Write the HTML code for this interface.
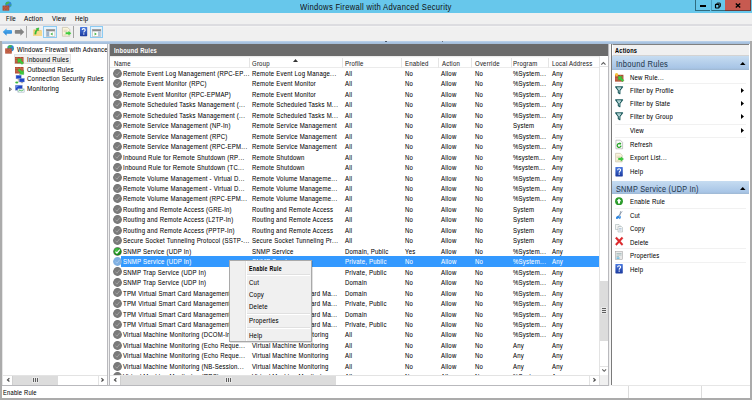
<!DOCTYPE html>
<html><head><meta charset="utf-8"><style>
html,body{margin:0;padding:0;}
body{width:752px;height:400px;position:relative;overflow:hidden;background:#f0f0f0;font-family:'Liberation Sans', sans-serif;}
body div{position:absolute;}
.t{white-space:nowrap;font-family:'Liberation Sans', sans-serif;}
svg{overflow:visible}
</style></head><body>
<div style="left:0px;top:0px;width:752px;height:12.5px;background:#67c7eb"></div>
<div class="t" style="left:300.2px;top:1.6px;font-size:8.919px;line-height:10px;color:#111;font-weight:normal;transform:scaleX(0.8600);transform-origin:0 0;letter-spacing:0.320px;-webkit-text-stroke:0px #111;">Windows Firewall with Advanced Security</div>
<div style="left:695.4px;top:0px;width:15.1px;height:10.8px;background:#67c7eb;border:0.9px solid #2f6c80;border-top:none;border-right:none;box-sizing:border-box"></div>
<div style="left:710.5px;top:0px;width:14.6px;height:10.8px;background:#67c7eb;border-bottom:0.8px solid #2f6c80;border-left:1.4px solid #4c9ec0;box-sizing:border-box"></div>
<div style="left:725.1px;top:0px;width:25.6px;height:10.8px;background:#c75a50;border:0.8px solid #6e3a36;border-top:none;border-left:none;box-sizing:border-box"></div>
<div style="left:700px;top:4.8px;width:6.2px;height:2.2px;background:#000"></div>
<svg style="position:absolute;left:714px;top:1.5px" width="8" height="7" viewBox="0 0 8 7"><rect x="2.9" y="1.1" width="3.5" height="3.7" rx="0.4" fill="none" stroke="#111" stroke-width="1"/><rect x="1.5" y="2.3" width="3.5" height="3.7" rx="0.5" fill="#67c7eb" stroke="#000" stroke-width="1.2"/></svg>
<svg style="position:absolute;left:735px;top:2.6px" width="6" height="5" viewBox="0 0 6 5"><path d="M0.8 0.5L5.2 4.5M5.2 0.5L0.8 4.5" stroke="#000" stroke-width="1.4"/></svg>
<svg style="position:absolute;left:1.5px;top:0.6px" width="10" height="10" viewBox="0 0 10 10"><circle cx="6.4" cy="3.6" r="3.1" fill="#2f86d8"/><path d="M3.6 2.2Q5 0.2 7.6 0.9L7 2.4L5.4 2.8L5 4L3.5 3.6Z" fill="#45b84a"/><path d="M8 3.8L9.4 3.6L9.1 5.4Z" fill="#45b84a"/><rect x="0.6" y="4.6" width="6.6" height="5" fill="#a8432b"/><path d="M0.6 6.2H7.2M0.6 7.9H7.2M2.6 4.6V6.2M5.2 4.6V6.2M3.9 6.2V7.9M2.6 7.9V9.6M5.2 7.9V9.6" stroke="#d0806a" stroke-width="0.4"/></svg>
<div style="left:0px;top:12.5px;width:752px;height:11.5px;background:#f0f0f0"></div>
<div class="t" style="left:5.6px;top:13.6px;font-size:6.618px;line-height:10px;color:#000;font-weight:normal;transform:scaleX(0.8600);transform-origin:0 0;letter-spacing:0.237px;-webkit-text-stroke:0.05px #000;">File</div>
<div class="t" style="left:24.2px;top:13.6px;font-size:7.378px;line-height:10px;color:#000;font-weight:normal;transform:scaleX(0.8600);transform-origin:0 0;letter-spacing:0.264px;-webkit-text-stroke:0.05px #000;">Action</div>
<div class="t" style="left:52.1px;top:13.6px;font-size:7.161px;line-height:10px;color:#000;font-weight:normal;transform:scaleX(0.8600);transform-origin:0 0;letter-spacing:0.257px;-webkit-text-stroke:0.05px #000;">View</div>
<div class="t" style="left:74.7px;top:13.6px;font-size:7.053px;line-height:10px;color:#000;font-weight:normal;transform:scaleX(0.8600);transform-origin:0 0;letter-spacing:0.253px;-webkit-text-stroke:0.05px #000;">Help</div>
<div style="left:0px;top:24.3px;width:752px;height:1.3px;background:#dcdce0"></div>
<div style="left:0px;top:25.6px;width:752px;height:15.2px;background:linear-gradient(#f6f6f6,#f0f0f0 1.5px)"></div>
<svg style="position:absolute;left:0;top:24px" width="30" height="16" viewBox="0 24 30 16"><defs><linearGradient id="gb" x1="0" y1="0" x2="0" y2="1"><stop offset="0" stop-color="#5db4f0"/><stop offset="1" stop-color="#1a7fd6"/></linearGradient></defs><path d="M2.8 32L6.6 28.2V30H11.2Q12 30 12 31V32.8Q12 33.8 11.2 33.8H6.6V35.8Z" fill="url(#gb)"/><path d="M24.2 32L20.4 28.2V30H15.6Q14.8 30 14.8 31V32.8Q14.8 33.8 15.6 33.8H20.4V35.8Z" fill="#838383"/><rect x="26" y="26" width="0.9" height="11.8" fill="#a2a2a2"/></svg>
<svg style="position:absolute;left:32.6px;top:27.4px" width="9" height="9.5" viewBox="0 0 9 9.5"><path d="M0.4 2.4H3.4L4.2 3.2H8.6V9H0.4Z" fill="#e5c063"/><path d="M0.4 4H8.6V9H0.4Z" fill="#f6da8c"/><path d="M1.6 7.2Q1.4 4.2 3.6 2.6L3 1.6L6 0.8L5.4 4L4.7 3.3Q3 4.6 3.1 7.2Z" fill="#36c236" stroke="#2a9a2a" stroke-width="0.25"/></svg>
<div style="left:43px;top:25.8px;width:13.6px;height:12px;background:#e6f3fc;border:1.3px solid #8ccbf3;box-sizing:border-box"></div>
<svg style="position:absolute;left:45.5px;top:28.8px" width="9.2" height="7.6" viewBox="0 0 9.2 7.6"><rect x="0.3" y="0.3" width="8.6" height="7" fill="#fdfdfd" stroke="#a8a8a8" stroke-width="0.5"/><rect x="0.3" y="0.3" width="8.6" height="2" fill="#8a8a8a"/><rect x="0.5" y="2.3" width="2.8" height="5" fill="#9db3c9"/><path d="M6.6 3.6L4.4 5L6.6 6.4Z" fill="#3bb03b"/></svg>
<svg style="position:absolute;left:62px;top:27px" width="10" height="10" viewBox="0 0 10 10"><path d="M0.4 0.4H5.6L7.8 2.6V9.2H0.4Z" fill="#fbf5dc" stroke="#b9b39a" stroke-width="0.6"/><path d="M1.6 3.2H5.5M1.6 4.6H5.5M1.6 7.8H4" stroke="#c9c2a6" stroke-width="0.6"/><path d="M3.6 5.2H6.4V3.9L9.3 6.2L6.4 8.5V7.2H3.6Z" fill="#3ccc3c"/></svg>
<div style="left:73.2px;top:26px;width:0.9px;height:11.8px;background:#a2a2a2"></div>
<svg style="position:absolute;left:79.8px;top:27.2px" width="7.2" height="9.2" viewBox="0 0 7.2 9.2"><defs><linearGradient id="gh" x1="0" y1="0" x2="0" y2="1"><stop offset="0" stop-color="#4a7ae0"/><stop offset="1" stop-color="#1c3a9e"/></linearGradient></defs><rect x="0" y="0" width="7.2" height="9.2" rx="0.6" fill="url(#gh)"/><path d="M2.2 3.1Q2.2 1.6 3.7 1.6Q5.2 1.6 5.2 3Q5.2 3.8 4.3 4.4Q3.8 4.8 3.8 5.6" stroke="#fff" stroke-width="1.1" fill="none"/><rect x="3.2" y="6.4" width="1.2" height="1.2" fill="#fff"/></svg>
<div style="left:90px;top:25.8px;width:12.8px;height:12px;background:#e6f3fc;border:1.3px solid #8ccbf3;box-sizing:border-box"></div>
<svg style="position:absolute;left:91.8px;top:28.8px" width="9.2" height="7.6" viewBox="0 0 9.2 7.6"><rect x="0.3" y="0.3" width="8.6" height="7" fill="#fdfdfd" stroke="#a8a8a8" stroke-width="0.5"/><rect x="0.3" y="0.3" width="8.6" height="2" fill="#8a8a8a"/><rect x="6" y="2.3" width="2.7" height="5" fill="#b5c6d8"/><path d="M2.6 3.6L4.8 5L2.6 6.4Z" fill="#3bb03b"/></svg>
<div style="left:0px;top:40.7px;width:752px;height:3px;background:linear-gradient(#c3d7ec,#a9c4e2 40%,#a9c4e2 75%,#a4b6ca)"></div>
<div style="left:0px;top:40.8px;width:2.4px;height:359.2px;background:#ababab"></div>
<div style="left:749.7px;top:40.8px;width:2.3px;height:359.2px;background:#ababab"></div>
<div style="left:0px;top:398px;width:752px;height:2px;background:#ababab"></div>
<div style="left:2.4px;top:43.7px;width:747.3px;height:341.3px;background:#f0f0f0"></div>
<div style="left:2.4px;top:385px;width:607.1px;height:1px;background:#b9b9bd"></div>
<div style="left:2.4px;top:386px;width:747.3px;height:12px;background:#fff"></div>
<div style="left:628.2px;top:386px;width:0.9px;height:12px;background:#dcdcdc"></div>
<div style="left:701px;top:386px;width:0.9px;height:12px;background:#dcdcdc"></div>
<div class="t" style="left:3.3px;top:388px;font-size:6.727px;line-height:10px;color:#000;font-weight:normal;transform:scaleX(0.8600);transform-origin:0 0;letter-spacing:0.241px;-webkit-text-stroke:0.05px #000;">Enable Rule</div>
<div style="left:385.2px;top:40.7px;width:1.6px;height:1.5px;border-radius:50%;background:#3d4c5e"></div>
<div style="left:441.6px;top:40.7px;width:1.5px;height:1.5px;border-radius:50%;background:#4a5560"></div>
<div style="left:2.4px;top:43.7px;width:104.6px;height:341.3px;background:#fff"></div>
<div style="left:2.4px;top:43.7px;width:0.6px;height:341.3px;background:#e6e6e6"></div>
<div style="left:3px;top:375px;width:104px;height:10px;background:#fff;border-top:0.8px solid #e3e3e3;box-sizing:border-box"></div>
<div style="left:12.3px;top:375.6px;width:45.5px;height:9.4px;background:#dcdcdc;border-left:0.6px solid #cfcfcf;box-sizing:border-box"></div>
<div style="left:97.6px;top:375.6px;width:0.6px;height:9.4px;background:#e3e3e3"></div>
<svg style="position:absolute;left:6.6px;top:378px" width="2.8" height="3.8" viewBox="0 0 2.8 3.8"><path d="M2.4 0.3L0.5 1.9L2.4 3.5" stroke="#4a4a4a" stroke-width="1.15" fill="none"/></svg>
<svg style="position:absolute;left:100.6px;top:378px" width="2.8" height="3.8" viewBox="0 0 2.8 3.8"><path d="M0.4 0.3L2.3 1.9L0.4 3.5" stroke="#4a4a4a" stroke-width="1.15" fill="none"/></svg>
<div style="left:32.0px;top:377.0px;width:7px;height:5.8px;background:#e8e8e8"></div>
<div style="left:32.95px;top:378.0px;width:1.1px;height:3.8px;background:#5e5e5e"></div>
<div style="left:34.95px;top:378.0px;width:1.1px;height:3.8px;background:#5e5e5e"></div>
<div style="left:36.95px;top:378.0px;width:1.1px;height:3.8px;background:#5e5e5e"></div>
<div style="left:14.3px;top:54.3px;width:56.6px;height:9.7px;background:#f0f0f0;border:0.5px solid #e2e2e2;box-sizing:border-box"></div>
<div class="t" style="left:16.8px;top:45px;font-size:7.053px;line-height:10px;color:#000;font-weight:normal;transform:scaleX(0.8600);transform-origin:0 0;letter-spacing:0.253px;-webkit-text-stroke:0.05px #000;">Windows Firewall with Advance</div>
<div style="left:107px;top:43.7px;width:2px;height:331px;background:#f0f0f0"></div>
<div style="left:107px;top:43.7px;width:0.9px;height:341.3px;background:#b9b9bd"></div>
<div class="t" style="left:26.6px;top:54.5px;font-size:7.053px;line-height:10px;color:#000;font-weight:normal;transform:scaleX(0.8600);transform-origin:0 0;letter-spacing:0.253px;-webkit-text-stroke:0.05px #000;">Inbound Rules</div>
<div class="t" style="left:26.6px;top:64.5px;font-size:7.053px;line-height:10px;color:#000;font-weight:normal;transform:scaleX(0.8600);transform-origin:0 0;letter-spacing:0.253px;-webkit-text-stroke:0.05px #000;">Outbound Rules</div>
<div class="t" style="left:26.6px;top:74.3px;font-size:7.053px;line-height:10px;color:#000;font-weight:normal;transform:scaleX(0.8600);transform-origin:0 0;letter-spacing:0.253px;-webkit-text-stroke:0.05px #000;">Connection Security Rules</div>
<div class="t" style="left:26.6px;top:84px;font-size:7.432px;line-height:10px;color:#000;font-weight:normal;transform:scaleX(0.8600);transform-origin:0 0;letter-spacing:0.266px;-webkit-text-stroke:0.05px #000;">Monitoring</div>
<svg style="position:absolute;left:8.8px;top:87.4px" width="3" height="4.5" viewBox="0 0 3 4.5"><path d="M0.5 0.5L2.6 2.25L0.5 4Z" stroke="#5e5e5e" stroke-width="0.7" fill="#b0b0b0"/></svg>
<svg style="position:absolute;left:5px;top:44.8px" width="9.5" height="9" viewBox="0 0 9.5 9"><circle cx="5.6" cy="3.3" r="3.3" fill="#2f86d8"/><path d="M2.8 1.8Q4.5 -0.2 7 0.6L6.3 2.2L4.8 2.4L4.4 3.6L3 3.2Z" fill="#45b84a"/><path d="M7.5 3.5L8.9 3.3L8.6 5Z" fill="#45b84a"/><g transform="translate(0.2 3.4) scale(0.77 0.8)"><rect x="0" y="0" width="8.5" height="6.5" fill="#b14a30"/><path d="M0 1.6H8.5M0 3.25H8.5M0 4.9H8.5M2 0V1.6M5.5 0V1.6M3.7 1.6V3.25M7 1.6V3.25M2 3.25V4.9M5.5 3.25V4.9M3.7 4.9V6.5M7 4.9V6.5" stroke="#d98a6e" stroke-width="0.45"/></g></svg>
<svg style="position:absolute;left:15.3px;top:56.7px" width="9" height="7.5" viewBox="0 0 9 7.5"><rect x="0" y="0" width="8.5" height="6.5" fill="#b14a30"/><path d="M0 1.6H8.5M0 3.25H8.5M0 4.9H8.5M2 0V1.6M5.5 0V1.6M3.7 1.6V3.25M7 1.6V3.25M2 3.25V4.9M5.5 3.25V4.9M3.7 4.9V6.5M7 4.9V6.5" stroke="#d98a6e" stroke-width="0.45"/><path d="M2.6 1.6L7.2 1.9L5.9 3.2L8.6 5.9L7 7.5L4.3 4.8L2.9 6.2Z" fill="#3ccf3c" stroke="#2a9a2a" stroke-width="0.3"/></svg>
<svg style="position:absolute;left:15.3px;top:66.6px" width="9" height="7.5" viewBox="0 0 9 7.5"><rect x="0" y="0" width="8.5" height="6.5" fill="#b14a30"/><path d="M0 1.6H8.5M0 3.25H8.5M0 4.9H8.5M2 0V1.6M5.5 0V1.6M3.7 1.6V3.25M7 1.6V3.25M2 3.25V4.9M5.5 3.25V4.9M3.7 4.9V6.5M7 4.9V6.5" stroke="#d98a6e" stroke-width="0.45"/><path d="M8.8 7.6L4.2 7.3L5.5 6L2.8 3.3L4.4 1.7L7.1 4.4L8.5 3Z" fill="#3ccf3c" stroke="#2a9a2a" stroke-width="0.3"/></svg>
<svg style="position:absolute;left:14.6px;top:74.8px" width="10" height="9.5" viewBox="0 0 10 9.5"><rect x="1" y="0.2" width="5.2" height="3.6" fill="#1f46c8" stroke="#8aa0d8" stroke-width="0.4"/><rect x="2.6" y="3.8" width="2" height="0.8" fill="#999"/><rect x="4.2" y="3.4" width="5.2" height="3.6" fill="#1f46c8" stroke="#8aa0d8" stroke-width="0.4"/><rect x="5.8" y="7" width="2.2" height="1.2" fill="#aaa"/><path d="M3.4 4.6V7" stroke="#666" stroke-width="0.4"/><ellipse cx="1.8" cy="7.4" rx="1.6" ry="1" fill="#3cba3c"/></svg>
<svg style="position:absolute;left:15.3px;top:85.2px" width="9.5" height="7.5" viewBox="0 0 9.5 7.5"><rect x="0.3" y="0.2" width="7" height="5" fill="#1f46c8" stroke="#9aa8c8" stroke-width="0.5"/><path d="M0.8 0.7L4 0.7L1 3Z" fill="#6a8ee8"/><rect x="2.8" y="3.8" width="6.5" height="3.4" fill="#e4ecf4" stroke="#9ab" stroke-width="0.4"/><path d="M3.4 6.3L5 4.8L6.2 6L8.8 4.6" stroke="#3cba3c" stroke-width="0.8" fill="none"/></svg>
<div style="left:109px;top:43.7px;width:1px;height:341.3px;background:#b9b9bd"></div>
<div style="left:110px;top:43.7px;width:498.4px;height:12.2px;background:#6b6b6b"></div>
<div class="t" style="left:113.8px;top:45.5px;font-size:6.760px;line-height:10px;color:#fff;font-weight:bold;transform:scaleX(0.8600);transform-origin:0 0;letter-spacing:0.242px;-webkit-text-stroke:0px #fff;">Inbound Rules</div>
<div style="left:110px;top:55.9px;width:489.3px;height:11.8px;background:linear-gradient(#e4e4e4,#fff 1.8px,#fff)"></div>
<div style="left:110px;top:67.3px;width:489.3px;height:0.8px;background:#ebebeb"></div>
<div style="left:248.6px;top:57.8px;width:0.8px;height:9.9px;background:#e5e5e5"></div>
<div style="left:341.6px;top:57.8px;width:0.8px;height:9.9px;background:#e5e5e5"></div>
<div style="left:401.40000000000003px;top:57.8px;width:0.8px;height:9.9px;background:#e5e5e5"></div>
<div style="left:438.20000000000005px;top:57.8px;width:0.8px;height:9.9px;background:#e5e5e5"></div>
<div style="left:471.20000000000005px;top:57.8px;width:0.8px;height:9.9px;background:#e5e5e5"></div>
<div style="left:511.40000000000003px;top:57.8px;width:0.8px;height:9.9px;background:#e5e5e5"></div>
<div style="left:548.4px;top:57.8px;width:0.8px;height:9.9px;background:#e5e5e5"></div>
<div class="t" style="left:114px;top:58.9px;font-size:6.998px;line-height:10px;color:#1e1e1e;font-weight:normal;transform:scaleX(0.8600);transform-origin:0 0;letter-spacing:0.251px;-webkit-text-stroke:0.05px #1e1e1e;">Name</div>
<div class="t" style="left:252px;top:58.9px;font-size:6.998px;line-height:10px;color:#1e1e1e;font-weight:normal;transform:scaleX(0.8600);transform-origin:0 0;letter-spacing:0.251px;-webkit-text-stroke:0.05px #1e1e1e;">Group</div>
<div class="t" style="left:345.3px;top:58.9px;font-size:6.998px;line-height:10px;color:#1e1e1e;font-weight:normal;transform:scaleX(0.8600);transform-origin:0 0;letter-spacing:0.251px;-webkit-text-stroke:0.05px #1e1e1e;">Profile</div>
<div class="t" style="left:404.7px;top:58.9px;font-size:6.998px;line-height:10px;color:#1e1e1e;font-weight:normal;transform:scaleX(0.8600);transform-origin:0 0;letter-spacing:0.251px;-webkit-text-stroke:0.05px #1e1e1e;">Enabled</div>
<div class="t" style="left:441.5px;top:58.9px;font-size:6.998px;line-height:10px;color:#1e1e1e;font-weight:normal;transform:scaleX(0.8600);transform-origin:0 0;letter-spacing:0.251px;-webkit-text-stroke:0.05px #1e1e1e;">Action</div>
<div class="t" style="left:474.8px;top:58.9px;font-size:6.998px;line-height:10px;color:#1e1e1e;font-weight:normal;transform:scaleX(0.8600);transform-origin:0 0;letter-spacing:0.251px;-webkit-text-stroke:0.05px #1e1e1e;">Override</div>
<div class="t" style="left:513px;top:58.9px;font-size:6.998px;line-height:10px;color:#1e1e1e;font-weight:normal;transform:scaleX(0.8600);transform-origin:0 0;letter-spacing:0.251px;-webkit-text-stroke:0.05px #1e1e1e;">Program</div>
<div class="t" style="left:552.3px;top:58.9px;font-size:6.998px;line-height:10px;color:#1e1e1e;font-weight:normal;transform:scaleX(0.8600);transform-origin:0 0;letter-spacing:0.251px;-webkit-text-stroke:0.05px #1e1e1e;">Local Address</div>
<svg style="position:absolute;left:292.5px;top:59.3px" width="5" height="3" viewBox="0 0 5 3"><path d="M0 3L2.5 0L5 3Z" fill="#333"/></svg>
<div style="left:110px;top:68.1px;width:489.3px;height:306.9px;background:#fff"></div>
<div style="left:109.7px;top:68.4px;width:489.6px;height:306.6px;overflow:hidden">
<svg style="position:absolute;left:3.0999999999999943px;top:0.29999999999999716px" width="9" height="9" viewBox="0 0 10 10"><circle cx="5" cy="5" r="4.9" fill="#737373"/><circle cx="5" cy="5" r="4.2" fill="#7a7a7a"/><path d="M2.7 5.1L4.4 6.9L7.5 3" stroke="#a6a6a6" stroke-width="1" fill="none"/></svg>
<div class="t" style="left:13.299999999999997px;top:0.5699999999999967px;font-size:6.998px;line-height:10px;color:#000;font-weight:normal;transform:scaleX(0.8600);transform-origin:0 0;letter-spacing:0.251px;-webkit-text-stroke:0.05px #000;">Remote Event Log Management (RPC-EP<span style="letter-spacing:0.551px">...</span></div>
<div class="t" style="left:142.3px;top:0.5699999999999967px;font-size:6.998px;line-height:10px;color:#000;font-weight:normal;transform:scaleX(0.8600);transform-origin:0 0;letter-spacing:0.251px;-webkit-text-stroke:0.05px #000;">Remote Event Log Manage<span style="letter-spacing:0.551px">...</span></div>
<div class="t" style="left:235.60000000000002px;top:0.5699999999999967px;font-size:6.998px;line-height:10px;color:#000;font-weight:normal;transform:scaleX(0.8600);transform-origin:0 0;letter-spacing:0.251px;-webkit-text-stroke:0.05px #000;">All</div>
<div class="t" style="left:295.0px;top:0.5699999999999967px;font-size:6.998px;line-height:10px;color:#000;font-weight:normal;transform:scaleX(0.8600);transform-origin:0 0;letter-spacing:0.251px;-webkit-text-stroke:0.05px #000;">No</div>
<div class="t" style="left:331.8px;top:0.5699999999999967px;font-size:6.998px;line-height:10px;color:#000;font-weight:normal;transform:scaleX(0.8600);transform-origin:0 0;letter-spacing:0.251px;-webkit-text-stroke:0.05px #000;">Allow</div>
<div class="t" style="left:365.1px;top:0.5699999999999967px;font-size:6.998px;line-height:10px;color:#000;font-weight:normal;transform:scaleX(0.8600);transform-origin:0 0;letter-spacing:0.251px;-webkit-text-stroke:0.05px #000;">No</div>
<div class="t" style="left:403.3px;top:0.5699999999999967px;font-size:6.998px;line-height:10px;color:#000;font-weight:normal;transform:scaleX(0.8600);transform-origin:0 0;letter-spacing:0.251px;-webkit-text-stroke:0.05px #000;">%System<span style="letter-spacing:0.551px">...</span></div>
<div class="t" style="left:442.59999999999997px;top:0.5699999999999967px;font-size:6.998px;line-height:10px;color:#000;font-weight:normal;transform:scaleX(0.8600);transform-origin:0 0;letter-spacing:0.251px;-webkit-text-stroke:0.05px #000;">Any</div>
<svg style="position:absolute;left:3.0999999999999943px;top:10.759999999999991px" width="9" height="9" viewBox="0 0 10 10"><circle cx="5" cy="5" r="4.9" fill="#737373"/><circle cx="5" cy="5" r="4.2" fill="#7a7a7a"/><path d="M2.7 5.1L4.4 6.9L7.5 3" stroke="#a6a6a6" stroke-width="1" fill="none"/></svg>
<div class="t" style="left:13.299999999999997px;top:11.02999999999999px;font-size:6.998px;line-height:10px;color:#000;font-weight:normal;transform:scaleX(0.8600);transform-origin:0 0;letter-spacing:0.251px;-webkit-text-stroke:0.05px #000;">Remote Event Monitor (RPC)</div>
<div class="t" style="left:142.3px;top:11.02999999999999px;font-size:6.998px;line-height:10px;color:#000;font-weight:normal;transform:scaleX(0.8600);transform-origin:0 0;letter-spacing:0.251px;-webkit-text-stroke:0.05px #000;">Remote Event Monitor</div>
<div class="t" style="left:235.60000000000002px;top:11.02999999999999px;font-size:6.998px;line-height:10px;color:#000;font-weight:normal;transform:scaleX(0.8600);transform-origin:0 0;letter-spacing:0.251px;-webkit-text-stroke:0.05px #000;">All</div>
<div class="t" style="left:295.0px;top:11.02999999999999px;font-size:6.998px;line-height:10px;color:#000;font-weight:normal;transform:scaleX(0.8600);transform-origin:0 0;letter-spacing:0.251px;-webkit-text-stroke:0.05px #000;">No</div>
<div class="t" style="left:331.8px;top:11.02999999999999px;font-size:6.998px;line-height:10px;color:#000;font-weight:normal;transform:scaleX(0.8600);transform-origin:0 0;letter-spacing:0.251px;-webkit-text-stroke:0.05px #000;">Allow</div>
<div class="t" style="left:365.1px;top:11.02999999999999px;font-size:6.998px;line-height:10px;color:#000;font-weight:normal;transform:scaleX(0.8600);transform-origin:0 0;letter-spacing:0.251px;-webkit-text-stroke:0.05px #000;">No</div>
<div class="t" style="left:403.3px;top:11.02999999999999px;font-size:6.998px;line-height:10px;color:#000;font-weight:normal;transform:scaleX(0.8600);transform-origin:0 0;letter-spacing:0.251px;-webkit-text-stroke:0.05px #000;">%System<span style="letter-spacing:0.551px">...</span></div>
<div class="t" style="left:442.59999999999997px;top:11.02999999999999px;font-size:6.998px;line-height:10px;color:#000;font-weight:normal;transform:scaleX(0.8600);transform-origin:0 0;letter-spacing:0.251px;-webkit-text-stroke:0.05px #000;">Any</div>
<svg style="position:absolute;left:3.0999999999999943px;top:21.22px" width="9" height="9" viewBox="0 0 10 10"><circle cx="5" cy="5" r="4.9" fill="#737373"/><circle cx="5" cy="5" r="4.2" fill="#7a7a7a"/><path d="M2.7 5.1L4.4 6.9L7.5 3" stroke="#a6a6a6" stroke-width="1" fill="none"/></svg>
<div class="t" style="left:13.299999999999997px;top:21.49px;font-size:6.998px;line-height:10px;color:#000;font-weight:normal;transform:scaleX(0.8600);transform-origin:0 0;letter-spacing:0.251px;-webkit-text-stroke:0.05px #000;">Remote Event Monitor (RPC-EPMAP)</div>
<div class="t" style="left:142.3px;top:21.49px;font-size:6.998px;line-height:10px;color:#000;font-weight:normal;transform:scaleX(0.8600);transform-origin:0 0;letter-spacing:0.251px;-webkit-text-stroke:0.05px #000;">Remote Event Monitor</div>
<div class="t" style="left:235.60000000000002px;top:21.49px;font-size:6.998px;line-height:10px;color:#000;font-weight:normal;transform:scaleX(0.8600);transform-origin:0 0;letter-spacing:0.251px;-webkit-text-stroke:0.05px #000;">All</div>
<div class="t" style="left:295.0px;top:21.49px;font-size:6.998px;line-height:10px;color:#000;font-weight:normal;transform:scaleX(0.8600);transform-origin:0 0;letter-spacing:0.251px;-webkit-text-stroke:0.05px #000;">No</div>
<div class="t" style="left:331.8px;top:21.49px;font-size:6.998px;line-height:10px;color:#000;font-weight:normal;transform:scaleX(0.8600);transform-origin:0 0;letter-spacing:0.251px;-webkit-text-stroke:0.05px #000;">Allow</div>
<div class="t" style="left:365.1px;top:21.49px;font-size:6.998px;line-height:10px;color:#000;font-weight:normal;transform:scaleX(0.8600);transform-origin:0 0;letter-spacing:0.251px;-webkit-text-stroke:0.05px #000;">No</div>
<div class="t" style="left:403.3px;top:21.49px;font-size:6.998px;line-height:10px;color:#000;font-weight:normal;transform:scaleX(0.8600);transform-origin:0 0;letter-spacing:0.251px;-webkit-text-stroke:0.05px #000;">%System<span style="letter-spacing:0.551px">...</span></div>
<div class="t" style="left:442.59999999999997px;top:21.49px;font-size:6.998px;line-height:10px;color:#000;font-weight:normal;transform:scaleX(0.8600);transform-origin:0 0;letter-spacing:0.251px;-webkit-text-stroke:0.05px #000;">Any</div>
<svg style="position:absolute;left:3.0999999999999943px;top:31.680000000000007px" width="9" height="9" viewBox="0 0 10 10"><circle cx="5" cy="5" r="4.9" fill="#737373"/><circle cx="5" cy="5" r="4.2" fill="#7a7a7a"/><path d="M2.7 5.1L4.4 6.9L7.5 3" stroke="#a6a6a6" stroke-width="1" fill="none"/></svg>
<div class="t" style="left:13.299999999999997px;top:31.950000000000006px;font-size:6.998px;line-height:10px;color:#000;font-weight:normal;transform:scaleX(0.8600);transform-origin:0 0;letter-spacing:0.251px;-webkit-text-stroke:0.05px #000;">Remote Scheduled Tasks Management (<span style="letter-spacing:0.551px">...</span></div>
<div class="t" style="left:142.3px;top:31.950000000000006px;font-size:6.998px;line-height:10px;color:#000;font-weight:normal;transform:scaleX(0.8600);transform-origin:0 0;letter-spacing:0.251px;-webkit-text-stroke:0.05px #000;">Remote Scheduled Tasks M<span style="letter-spacing:0.551px">...</span></div>
<div class="t" style="left:235.60000000000002px;top:31.950000000000006px;font-size:6.998px;line-height:10px;color:#000;font-weight:normal;transform:scaleX(0.8600);transform-origin:0 0;letter-spacing:0.251px;-webkit-text-stroke:0.05px #000;">All</div>
<div class="t" style="left:295.0px;top:31.950000000000006px;font-size:6.998px;line-height:10px;color:#000;font-weight:normal;transform:scaleX(0.8600);transform-origin:0 0;letter-spacing:0.251px;-webkit-text-stroke:0.05px #000;">No</div>
<div class="t" style="left:331.8px;top:31.950000000000006px;font-size:6.998px;line-height:10px;color:#000;font-weight:normal;transform:scaleX(0.8600);transform-origin:0 0;letter-spacing:0.251px;-webkit-text-stroke:0.05px #000;">Allow</div>
<div class="t" style="left:365.1px;top:31.950000000000006px;font-size:6.998px;line-height:10px;color:#000;font-weight:normal;transform:scaleX(0.8600);transform-origin:0 0;letter-spacing:0.251px;-webkit-text-stroke:0.05px #000;">No</div>
<div class="t" style="left:403.3px;top:31.950000000000006px;font-size:6.998px;line-height:10px;color:#000;font-weight:normal;transform:scaleX(0.8600);transform-origin:0 0;letter-spacing:0.251px;-webkit-text-stroke:0.05px #000;">%System<span style="letter-spacing:0.551px">...</span></div>
<div class="t" style="left:442.59999999999997px;top:31.950000000000006px;font-size:6.998px;line-height:10px;color:#000;font-weight:normal;transform:scaleX(0.8600);transform-origin:0 0;letter-spacing:0.251px;-webkit-text-stroke:0.05px #000;">Any</div>
<svg style="position:absolute;left:3.0999999999999943px;top:42.14px" width="9" height="9" viewBox="0 0 10 10"><circle cx="5" cy="5" r="4.9" fill="#737373"/><circle cx="5" cy="5" r="4.2" fill="#7a7a7a"/><path d="M2.7 5.1L4.4 6.9L7.5 3" stroke="#a6a6a6" stroke-width="1" fill="none"/></svg>
<div class="t" style="left:13.299999999999997px;top:42.41px;font-size:6.998px;line-height:10px;color:#000;font-weight:normal;transform:scaleX(0.8600);transform-origin:0 0;letter-spacing:0.251px;-webkit-text-stroke:0.05px #000;">Remote Scheduled Tasks Management (<span style="letter-spacing:0.551px">...</span></div>
<div class="t" style="left:142.3px;top:42.41px;font-size:6.998px;line-height:10px;color:#000;font-weight:normal;transform:scaleX(0.8600);transform-origin:0 0;letter-spacing:0.251px;-webkit-text-stroke:0.05px #000;">Remote Scheduled Tasks M<span style="letter-spacing:0.551px">...</span></div>
<div class="t" style="left:235.60000000000002px;top:42.41px;font-size:6.998px;line-height:10px;color:#000;font-weight:normal;transform:scaleX(0.8600);transform-origin:0 0;letter-spacing:0.251px;-webkit-text-stroke:0.05px #000;">All</div>
<div class="t" style="left:295.0px;top:42.41px;font-size:6.998px;line-height:10px;color:#000;font-weight:normal;transform:scaleX(0.8600);transform-origin:0 0;letter-spacing:0.251px;-webkit-text-stroke:0.05px #000;">No</div>
<div class="t" style="left:331.8px;top:42.41px;font-size:6.998px;line-height:10px;color:#000;font-weight:normal;transform:scaleX(0.8600);transform-origin:0 0;letter-spacing:0.251px;-webkit-text-stroke:0.05px #000;">Allow</div>
<div class="t" style="left:365.1px;top:42.41px;font-size:6.998px;line-height:10px;color:#000;font-weight:normal;transform:scaleX(0.8600);transform-origin:0 0;letter-spacing:0.251px;-webkit-text-stroke:0.05px #000;">No</div>
<div class="t" style="left:403.3px;top:42.41px;font-size:6.998px;line-height:10px;color:#000;font-weight:normal;transform:scaleX(0.8600);transform-origin:0 0;letter-spacing:0.251px;-webkit-text-stroke:0.05px #000;">%System<span style="letter-spacing:0.551px">...</span></div>
<div class="t" style="left:442.59999999999997px;top:42.41px;font-size:6.998px;line-height:10px;color:#000;font-weight:normal;transform:scaleX(0.8600);transform-origin:0 0;letter-spacing:0.251px;-webkit-text-stroke:0.05px #000;">Any</div>
<svg style="position:absolute;left:3.0999999999999943px;top:52.599999999999994px" width="9" height="9" viewBox="0 0 10 10"><circle cx="5" cy="5" r="4.9" fill="#737373"/><circle cx="5" cy="5" r="4.2" fill="#7a7a7a"/><path d="M2.7 5.1L4.4 6.9L7.5 3" stroke="#a6a6a6" stroke-width="1" fill="none"/></svg>
<div class="t" style="left:13.299999999999997px;top:52.86999999999999px;font-size:6.998px;line-height:10px;color:#000;font-weight:normal;transform:scaleX(0.8600);transform-origin:0 0;letter-spacing:0.251px;-webkit-text-stroke:0.05px #000;">Remote Service Management (NP-In)</div>
<div class="t" style="left:142.3px;top:52.86999999999999px;font-size:6.998px;line-height:10px;color:#000;font-weight:normal;transform:scaleX(0.8600);transform-origin:0 0;letter-spacing:0.251px;-webkit-text-stroke:0.05px #000;">Remote Service Management</div>
<div class="t" style="left:235.60000000000002px;top:52.86999999999999px;font-size:6.998px;line-height:10px;color:#000;font-weight:normal;transform:scaleX(0.8600);transform-origin:0 0;letter-spacing:0.251px;-webkit-text-stroke:0.05px #000;">All</div>
<div class="t" style="left:295.0px;top:52.86999999999999px;font-size:6.998px;line-height:10px;color:#000;font-weight:normal;transform:scaleX(0.8600);transform-origin:0 0;letter-spacing:0.251px;-webkit-text-stroke:0.05px #000;">No</div>
<div class="t" style="left:331.8px;top:52.86999999999999px;font-size:6.998px;line-height:10px;color:#000;font-weight:normal;transform:scaleX(0.8600);transform-origin:0 0;letter-spacing:0.251px;-webkit-text-stroke:0.05px #000;">Allow</div>
<div class="t" style="left:365.1px;top:52.86999999999999px;font-size:6.998px;line-height:10px;color:#000;font-weight:normal;transform:scaleX(0.8600);transform-origin:0 0;letter-spacing:0.251px;-webkit-text-stroke:0.05px #000;">No</div>
<div class="t" style="left:403.3px;top:52.86999999999999px;font-size:6.998px;line-height:10px;color:#000;font-weight:normal;transform:scaleX(0.8600);transform-origin:0 0;letter-spacing:0.251px;-webkit-text-stroke:0.05px #000;">System</div>
<div class="t" style="left:442.59999999999997px;top:52.86999999999999px;font-size:6.998px;line-height:10px;color:#000;font-weight:normal;transform:scaleX(0.8600);transform-origin:0 0;letter-spacing:0.251px;-webkit-text-stroke:0.05px #000;">Any</div>
<svg style="position:absolute;left:3.0999999999999943px;top:63.06px" width="9" height="9" viewBox="0 0 10 10"><circle cx="5" cy="5" r="4.9" fill="#737373"/><circle cx="5" cy="5" r="4.2" fill="#7a7a7a"/><path d="M2.7 5.1L4.4 6.9L7.5 3" stroke="#a6a6a6" stroke-width="1" fill="none"/></svg>
<div class="t" style="left:13.299999999999997px;top:63.33px;font-size:6.998px;line-height:10px;color:#000;font-weight:normal;transform:scaleX(0.8600);transform-origin:0 0;letter-spacing:0.251px;-webkit-text-stroke:0.05px #000;">Remote Service Management (RPC)</div>
<div class="t" style="left:142.3px;top:63.33px;font-size:6.998px;line-height:10px;color:#000;font-weight:normal;transform:scaleX(0.8600);transform-origin:0 0;letter-spacing:0.251px;-webkit-text-stroke:0.05px #000;">Remote Service Management</div>
<div class="t" style="left:235.60000000000002px;top:63.33px;font-size:6.998px;line-height:10px;color:#000;font-weight:normal;transform:scaleX(0.8600);transform-origin:0 0;letter-spacing:0.251px;-webkit-text-stroke:0.05px #000;">All</div>
<div class="t" style="left:295.0px;top:63.33px;font-size:6.998px;line-height:10px;color:#000;font-weight:normal;transform:scaleX(0.8600);transform-origin:0 0;letter-spacing:0.251px;-webkit-text-stroke:0.05px #000;">No</div>
<div class="t" style="left:331.8px;top:63.33px;font-size:6.998px;line-height:10px;color:#000;font-weight:normal;transform:scaleX(0.8600);transform-origin:0 0;letter-spacing:0.251px;-webkit-text-stroke:0.05px #000;">Allow</div>
<div class="t" style="left:365.1px;top:63.33px;font-size:6.998px;line-height:10px;color:#000;font-weight:normal;transform:scaleX(0.8600);transform-origin:0 0;letter-spacing:0.251px;-webkit-text-stroke:0.05px #000;">No</div>
<div class="t" style="left:403.3px;top:63.33px;font-size:6.998px;line-height:10px;color:#000;font-weight:normal;transform:scaleX(0.8600);transform-origin:0 0;letter-spacing:0.251px;-webkit-text-stroke:0.05px #000;">%System<span style="letter-spacing:0.551px">...</span></div>
<div class="t" style="left:442.59999999999997px;top:63.33px;font-size:6.998px;line-height:10px;color:#000;font-weight:normal;transform:scaleX(0.8600);transform-origin:0 0;letter-spacing:0.251px;-webkit-text-stroke:0.05px #000;">Any</div>
<svg style="position:absolute;left:3.0999999999999943px;top:73.52000000000001px" width="9" height="9" viewBox="0 0 10 10"><circle cx="5" cy="5" r="4.9" fill="#737373"/><circle cx="5" cy="5" r="4.2" fill="#7a7a7a"/><path d="M2.7 5.1L4.4 6.9L7.5 3" stroke="#a6a6a6" stroke-width="1" fill="none"/></svg>
<div class="t" style="left:13.299999999999997px;top:73.79px;font-size:6.998px;line-height:10px;color:#000;font-weight:normal;transform:scaleX(0.8600);transform-origin:0 0;letter-spacing:0.251px;-webkit-text-stroke:0.05px #000;">Remote Service Management (RPC-EPM<span style="letter-spacing:0.551px">...</span></div>
<div class="t" style="left:142.3px;top:73.79px;font-size:6.998px;line-height:10px;color:#000;font-weight:normal;transform:scaleX(0.8600);transform-origin:0 0;letter-spacing:0.251px;-webkit-text-stroke:0.05px #000;">Remote Service Management</div>
<div class="t" style="left:235.60000000000002px;top:73.79px;font-size:6.998px;line-height:10px;color:#000;font-weight:normal;transform:scaleX(0.8600);transform-origin:0 0;letter-spacing:0.251px;-webkit-text-stroke:0.05px #000;">All</div>
<div class="t" style="left:295.0px;top:73.79px;font-size:6.998px;line-height:10px;color:#000;font-weight:normal;transform:scaleX(0.8600);transform-origin:0 0;letter-spacing:0.251px;-webkit-text-stroke:0.05px #000;">No</div>
<div class="t" style="left:331.8px;top:73.79px;font-size:6.998px;line-height:10px;color:#000;font-weight:normal;transform:scaleX(0.8600);transform-origin:0 0;letter-spacing:0.251px;-webkit-text-stroke:0.05px #000;">Allow</div>
<div class="t" style="left:365.1px;top:73.79px;font-size:6.998px;line-height:10px;color:#000;font-weight:normal;transform:scaleX(0.8600);transform-origin:0 0;letter-spacing:0.251px;-webkit-text-stroke:0.05px #000;">No</div>
<div class="t" style="left:403.3px;top:73.79px;font-size:6.998px;line-height:10px;color:#000;font-weight:normal;transform:scaleX(0.8600);transform-origin:0 0;letter-spacing:0.251px;-webkit-text-stroke:0.05px #000;">%System<span style="letter-spacing:0.551px">...</span></div>
<div class="t" style="left:442.59999999999997px;top:73.79px;font-size:6.998px;line-height:10px;color:#000;font-weight:normal;transform:scaleX(0.8600);transform-origin:0 0;letter-spacing:0.251px;-webkit-text-stroke:0.05px #000;">Any</div>
<svg style="position:absolute;left:3.0999999999999943px;top:83.97999999999999px" width="9" height="9" viewBox="0 0 10 10"><circle cx="5" cy="5" r="4.9" fill="#737373"/><circle cx="5" cy="5" r="4.2" fill="#7a7a7a"/><path d="M2.7 5.1L4.4 6.9L7.5 3" stroke="#a6a6a6" stroke-width="1" fill="none"/></svg>
<div class="t" style="left:13.299999999999997px;top:84.24999999999999px;font-size:6.998px;line-height:10px;color:#000;font-weight:normal;transform:scaleX(0.8600);transform-origin:0 0;letter-spacing:0.251px;-webkit-text-stroke:0.05px #000;">Inbound Rule for Remote Shutdown (RP<span style="letter-spacing:0.551px">...</span></div>
<div class="t" style="left:142.3px;top:84.24999999999999px;font-size:6.998px;line-height:10px;color:#000;font-weight:normal;transform:scaleX(0.8600);transform-origin:0 0;letter-spacing:0.251px;-webkit-text-stroke:0.05px #000;">Remote Shutdown</div>
<div class="t" style="left:235.60000000000002px;top:84.24999999999999px;font-size:6.998px;line-height:10px;color:#000;font-weight:normal;transform:scaleX(0.8600);transform-origin:0 0;letter-spacing:0.251px;-webkit-text-stroke:0.05px #000;">All</div>
<div class="t" style="left:295.0px;top:84.24999999999999px;font-size:6.998px;line-height:10px;color:#000;font-weight:normal;transform:scaleX(0.8600);transform-origin:0 0;letter-spacing:0.251px;-webkit-text-stroke:0.05px #000;">No</div>
<div class="t" style="left:331.8px;top:84.24999999999999px;font-size:6.998px;line-height:10px;color:#000;font-weight:normal;transform:scaleX(0.8600);transform-origin:0 0;letter-spacing:0.251px;-webkit-text-stroke:0.05px #000;">Allow</div>
<div class="t" style="left:365.1px;top:84.24999999999999px;font-size:6.998px;line-height:10px;color:#000;font-weight:normal;transform:scaleX(0.8600);transform-origin:0 0;letter-spacing:0.251px;-webkit-text-stroke:0.05px #000;">No</div>
<div class="t" style="left:403.3px;top:84.24999999999999px;font-size:6.998px;line-height:10px;color:#000;font-weight:normal;transform:scaleX(0.8600);transform-origin:0 0;letter-spacing:0.251px;-webkit-text-stroke:0.05px #000;">%system<span style="letter-spacing:0.551px">...</span></div>
<div class="t" style="left:442.59999999999997px;top:84.24999999999999px;font-size:6.998px;line-height:10px;color:#000;font-weight:normal;transform:scaleX(0.8600);transform-origin:0 0;letter-spacing:0.251px;-webkit-text-stroke:0.05px #000;">Any</div>
<svg style="position:absolute;left:3.0999999999999943px;top:94.44000000000003px" width="9" height="9" viewBox="0 0 10 10"><circle cx="5" cy="5" r="4.9" fill="#737373"/><circle cx="5" cy="5" r="4.2" fill="#7a7a7a"/><path d="M2.7 5.1L4.4 6.9L7.5 3" stroke="#a6a6a6" stroke-width="1" fill="none"/></svg>
<div class="t" style="left:13.299999999999997px;top:94.71000000000002px;font-size:6.998px;line-height:10px;color:#000;font-weight:normal;transform:scaleX(0.8600);transform-origin:0 0;letter-spacing:0.251px;-webkit-text-stroke:0.05px #000;">Inbound Rule for Remote Shutdown (TC<span style="letter-spacing:0.551px">...</span></div>
<div class="t" style="left:142.3px;top:94.71000000000002px;font-size:6.998px;line-height:10px;color:#000;font-weight:normal;transform:scaleX(0.8600);transform-origin:0 0;letter-spacing:0.251px;-webkit-text-stroke:0.05px #000;">Remote Shutdown</div>
<div class="t" style="left:235.60000000000002px;top:94.71000000000002px;font-size:6.998px;line-height:10px;color:#000;font-weight:normal;transform:scaleX(0.8600);transform-origin:0 0;letter-spacing:0.251px;-webkit-text-stroke:0.05px #000;">All</div>
<div class="t" style="left:295.0px;top:94.71000000000002px;font-size:6.998px;line-height:10px;color:#000;font-weight:normal;transform:scaleX(0.8600);transform-origin:0 0;letter-spacing:0.251px;-webkit-text-stroke:0.05px #000;">No</div>
<div class="t" style="left:331.8px;top:94.71000000000002px;font-size:6.998px;line-height:10px;color:#000;font-weight:normal;transform:scaleX(0.8600);transform-origin:0 0;letter-spacing:0.251px;-webkit-text-stroke:0.05px #000;">Allow</div>
<div class="t" style="left:365.1px;top:94.71000000000002px;font-size:6.998px;line-height:10px;color:#000;font-weight:normal;transform:scaleX(0.8600);transform-origin:0 0;letter-spacing:0.251px;-webkit-text-stroke:0.05px #000;">No</div>
<div class="t" style="left:403.3px;top:94.71000000000002px;font-size:6.998px;line-height:10px;color:#000;font-weight:normal;transform:scaleX(0.8600);transform-origin:0 0;letter-spacing:0.251px;-webkit-text-stroke:0.05px #000;">%system<span style="letter-spacing:0.551px">...</span></div>
<div class="t" style="left:442.59999999999997px;top:94.71000000000002px;font-size:6.998px;line-height:10px;color:#000;font-weight:normal;transform:scaleX(0.8600);transform-origin:0 0;letter-spacing:0.251px;-webkit-text-stroke:0.05px #000;">Any</div>
<svg style="position:absolute;left:3.0999999999999943px;top:104.9px" width="9" height="9" viewBox="0 0 10 10"><circle cx="5" cy="5" r="4.9" fill="#737373"/><circle cx="5" cy="5" r="4.2" fill="#7a7a7a"/><path d="M2.7 5.1L4.4 6.9L7.5 3" stroke="#a6a6a6" stroke-width="1" fill="none"/></svg>
<div class="t" style="left:13.299999999999997px;top:105.17px;font-size:6.998px;line-height:10px;color:#000;font-weight:normal;transform:scaleX(0.8600);transform-origin:0 0;letter-spacing:0.251px;-webkit-text-stroke:0.05px #000;">Remote Volume Management - Virtual D<span style="letter-spacing:0.551px">...</span></div>
<div class="t" style="left:142.3px;top:105.17px;font-size:6.998px;line-height:10px;color:#000;font-weight:normal;transform:scaleX(0.8600);transform-origin:0 0;letter-spacing:0.251px;-webkit-text-stroke:0.05px #000;">Remote Volume Manageme<span style="letter-spacing:0.551px">...</span></div>
<div class="t" style="left:235.60000000000002px;top:105.17px;font-size:6.998px;line-height:10px;color:#000;font-weight:normal;transform:scaleX(0.8600);transform-origin:0 0;letter-spacing:0.251px;-webkit-text-stroke:0.05px #000;">All</div>
<div class="t" style="left:295.0px;top:105.17px;font-size:6.998px;line-height:10px;color:#000;font-weight:normal;transform:scaleX(0.8600);transform-origin:0 0;letter-spacing:0.251px;-webkit-text-stroke:0.05px #000;">No</div>
<div class="t" style="left:331.8px;top:105.17px;font-size:6.998px;line-height:10px;color:#000;font-weight:normal;transform:scaleX(0.8600);transform-origin:0 0;letter-spacing:0.251px;-webkit-text-stroke:0.05px #000;">Allow</div>
<div class="t" style="left:365.1px;top:105.17px;font-size:6.998px;line-height:10px;color:#000;font-weight:normal;transform:scaleX(0.8600);transform-origin:0 0;letter-spacing:0.251px;-webkit-text-stroke:0.05px #000;">No</div>
<div class="t" style="left:403.3px;top:105.17px;font-size:6.998px;line-height:10px;color:#000;font-weight:normal;transform:scaleX(0.8600);transform-origin:0 0;letter-spacing:0.251px;-webkit-text-stroke:0.05px #000;">%System<span style="letter-spacing:0.551px">...</span></div>
<div class="t" style="left:442.59999999999997px;top:105.17px;font-size:6.998px;line-height:10px;color:#000;font-weight:normal;transform:scaleX(0.8600);transform-origin:0 0;letter-spacing:0.251px;-webkit-text-stroke:0.05px #000;">Any</div>
<svg style="position:absolute;left:3.0999999999999943px;top:115.35999999999999px" width="9" height="9" viewBox="0 0 10 10"><circle cx="5" cy="5" r="4.9" fill="#737373"/><circle cx="5" cy="5" r="4.2" fill="#7a7a7a"/><path d="M2.7 5.1L4.4 6.9L7.5 3" stroke="#a6a6a6" stroke-width="1" fill="none"/></svg>
<div class="t" style="left:13.299999999999997px;top:115.62999999999998px;font-size:6.998px;line-height:10px;color:#000;font-weight:normal;transform:scaleX(0.8600);transform-origin:0 0;letter-spacing:0.251px;-webkit-text-stroke:0.05px #000;">Remote Volume Management - Virtual D<span style="letter-spacing:0.551px">...</span></div>
<div class="t" style="left:142.3px;top:115.62999999999998px;font-size:6.998px;line-height:10px;color:#000;font-weight:normal;transform:scaleX(0.8600);transform-origin:0 0;letter-spacing:0.251px;-webkit-text-stroke:0.05px #000;">Remote Volume Manageme<span style="letter-spacing:0.551px">...</span></div>
<div class="t" style="left:235.60000000000002px;top:115.62999999999998px;font-size:6.998px;line-height:10px;color:#000;font-weight:normal;transform:scaleX(0.8600);transform-origin:0 0;letter-spacing:0.251px;-webkit-text-stroke:0.05px #000;">All</div>
<div class="t" style="left:295.0px;top:115.62999999999998px;font-size:6.998px;line-height:10px;color:#000;font-weight:normal;transform:scaleX(0.8600);transform-origin:0 0;letter-spacing:0.251px;-webkit-text-stroke:0.05px #000;">No</div>
<div class="t" style="left:331.8px;top:115.62999999999998px;font-size:6.998px;line-height:10px;color:#000;font-weight:normal;transform:scaleX(0.8600);transform-origin:0 0;letter-spacing:0.251px;-webkit-text-stroke:0.05px #000;">Allow</div>
<div class="t" style="left:365.1px;top:115.62999999999998px;font-size:6.998px;line-height:10px;color:#000;font-weight:normal;transform:scaleX(0.8600);transform-origin:0 0;letter-spacing:0.251px;-webkit-text-stroke:0.05px #000;">No</div>
<div class="t" style="left:403.3px;top:115.62999999999998px;font-size:6.998px;line-height:10px;color:#000;font-weight:normal;transform:scaleX(0.8600);transform-origin:0 0;letter-spacing:0.251px;-webkit-text-stroke:0.05px #000;">%System<span style="letter-spacing:0.551px">...</span></div>
<div class="t" style="left:442.59999999999997px;top:115.62999999999998px;font-size:6.998px;line-height:10px;color:#000;font-weight:normal;transform:scaleX(0.8600);transform-origin:0 0;letter-spacing:0.251px;-webkit-text-stroke:0.05px #000;">Any</div>
<svg style="position:absolute;left:3.0999999999999943px;top:125.82000000000002px" width="9" height="9" viewBox="0 0 10 10"><circle cx="5" cy="5" r="4.9" fill="#737373"/><circle cx="5" cy="5" r="4.2" fill="#7a7a7a"/><path d="M2.7 5.1L4.4 6.9L7.5 3" stroke="#a6a6a6" stroke-width="1" fill="none"/></svg>
<div class="t" style="left:13.299999999999997px;top:126.09000000000002px;font-size:6.998px;line-height:10px;color:#000;font-weight:normal;transform:scaleX(0.8600);transform-origin:0 0;letter-spacing:0.251px;-webkit-text-stroke:0.05px #000;">Remote Volume Management (RPC-EPM<span style="letter-spacing:0.551px">...</span></div>
<div class="t" style="left:142.3px;top:126.09000000000002px;font-size:6.998px;line-height:10px;color:#000;font-weight:normal;transform:scaleX(0.8600);transform-origin:0 0;letter-spacing:0.251px;-webkit-text-stroke:0.05px #000;">Remote Volume Manageme<span style="letter-spacing:0.551px">...</span></div>
<div class="t" style="left:235.60000000000002px;top:126.09000000000002px;font-size:6.998px;line-height:10px;color:#000;font-weight:normal;transform:scaleX(0.8600);transform-origin:0 0;letter-spacing:0.251px;-webkit-text-stroke:0.05px #000;">All</div>
<div class="t" style="left:295.0px;top:126.09000000000002px;font-size:6.998px;line-height:10px;color:#000;font-weight:normal;transform:scaleX(0.8600);transform-origin:0 0;letter-spacing:0.251px;-webkit-text-stroke:0.05px #000;">No</div>
<div class="t" style="left:331.8px;top:126.09000000000002px;font-size:6.998px;line-height:10px;color:#000;font-weight:normal;transform:scaleX(0.8600);transform-origin:0 0;letter-spacing:0.251px;-webkit-text-stroke:0.05px #000;">Allow</div>
<div class="t" style="left:365.1px;top:126.09000000000002px;font-size:6.998px;line-height:10px;color:#000;font-weight:normal;transform:scaleX(0.8600);transform-origin:0 0;letter-spacing:0.251px;-webkit-text-stroke:0.05px #000;">No</div>
<div class="t" style="left:403.3px;top:126.09000000000002px;font-size:6.998px;line-height:10px;color:#000;font-weight:normal;transform:scaleX(0.8600);transform-origin:0 0;letter-spacing:0.251px;-webkit-text-stroke:0.05px #000;">%System<span style="letter-spacing:0.551px">...</span></div>
<div class="t" style="left:442.59999999999997px;top:126.09000000000002px;font-size:6.998px;line-height:10px;color:#000;font-weight:normal;transform:scaleX(0.8600);transform-origin:0 0;letter-spacing:0.251px;-webkit-text-stroke:0.05px #000;">Any</div>
<svg style="position:absolute;left:3.0999999999999943px;top:136.28px" width="9" height="9" viewBox="0 0 10 10"><circle cx="5" cy="5" r="4.9" fill="#737373"/><circle cx="5" cy="5" r="4.2" fill="#7a7a7a"/><path d="M2.7 5.1L4.4 6.9L7.5 3" stroke="#a6a6a6" stroke-width="1" fill="none"/></svg>
<div class="t" style="left:13.299999999999997px;top:136.55px;font-size:6.998px;line-height:10px;color:#000;font-weight:normal;transform:scaleX(0.8600);transform-origin:0 0;letter-spacing:0.251px;-webkit-text-stroke:0.05px #000;">Routing and Remote Access (GRE-In)</div>
<div class="t" style="left:142.3px;top:136.55px;font-size:6.998px;line-height:10px;color:#000;font-weight:normal;transform:scaleX(0.8600);transform-origin:0 0;letter-spacing:0.251px;-webkit-text-stroke:0.05px #000;">Routing and Remote Access</div>
<div class="t" style="left:235.60000000000002px;top:136.55px;font-size:6.998px;line-height:10px;color:#000;font-weight:normal;transform:scaleX(0.8600);transform-origin:0 0;letter-spacing:0.251px;-webkit-text-stroke:0.05px #000;">All</div>
<div class="t" style="left:295.0px;top:136.55px;font-size:6.998px;line-height:10px;color:#000;font-weight:normal;transform:scaleX(0.8600);transform-origin:0 0;letter-spacing:0.251px;-webkit-text-stroke:0.05px #000;">No</div>
<div class="t" style="left:331.8px;top:136.55px;font-size:6.998px;line-height:10px;color:#000;font-weight:normal;transform:scaleX(0.8600);transform-origin:0 0;letter-spacing:0.251px;-webkit-text-stroke:0.05px #000;">Allow</div>
<div class="t" style="left:365.1px;top:136.55px;font-size:6.998px;line-height:10px;color:#000;font-weight:normal;transform:scaleX(0.8600);transform-origin:0 0;letter-spacing:0.251px;-webkit-text-stroke:0.05px #000;">No</div>
<div class="t" style="left:403.3px;top:136.55px;font-size:6.998px;line-height:10px;color:#000;font-weight:normal;transform:scaleX(0.8600);transform-origin:0 0;letter-spacing:0.251px;-webkit-text-stroke:0.05px #000;">System</div>
<div class="t" style="left:442.59999999999997px;top:136.55px;font-size:6.998px;line-height:10px;color:#000;font-weight:normal;transform:scaleX(0.8600);transform-origin:0 0;letter-spacing:0.251px;-webkit-text-stroke:0.05px #000;">Any</div>
<svg style="position:absolute;left:3.0999999999999943px;top:146.73999999999998px" width="9" height="9" viewBox="0 0 10 10"><circle cx="5" cy="5" r="4.9" fill="#737373"/><circle cx="5" cy="5" r="4.2" fill="#7a7a7a"/><path d="M2.7 5.1L4.4 6.9L7.5 3" stroke="#a6a6a6" stroke-width="1" fill="none"/></svg>
<div class="t" style="left:13.299999999999997px;top:147.01px;font-size:6.998px;line-height:10px;color:#000;font-weight:normal;transform:scaleX(0.8600);transform-origin:0 0;letter-spacing:0.251px;-webkit-text-stroke:0.05px #000;">Routing and Remote Access (L2TP-In)</div>
<div class="t" style="left:142.3px;top:147.01px;font-size:6.998px;line-height:10px;color:#000;font-weight:normal;transform:scaleX(0.8600);transform-origin:0 0;letter-spacing:0.251px;-webkit-text-stroke:0.05px #000;">Routing and Remote Access</div>
<div class="t" style="left:235.60000000000002px;top:147.01px;font-size:6.998px;line-height:10px;color:#000;font-weight:normal;transform:scaleX(0.8600);transform-origin:0 0;letter-spacing:0.251px;-webkit-text-stroke:0.05px #000;">All</div>
<div class="t" style="left:295.0px;top:147.01px;font-size:6.998px;line-height:10px;color:#000;font-weight:normal;transform:scaleX(0.8600);transform-origin:0 0;letter-spacing:0.251px;-webkit-text-stroke:0.05px #000;">No</div>
<div class="t" style="left:331.8px;top:147.01px;font-size:6.998px;line-height:10px;color:#000;font-weight:normal;transform:scaleX(0.8600);transform-origin:0 0;letter-spacing:0.251px;-webkit-text-stroke:0.05px #000;">Allow</div>
<div class="t" style="left:365.1px;top:147.01px;font-size:6.998px;line-height:10px;color:#000;font-weight:normal;transform:scaleX(0.8600);transform-origin:0 0;letter-spacing:0.251px;-webkit-text-stroke:0.05px #000;">No</div>
<div class="t" style="left:403.3px;top:147.01px;font-size:6.998px;line-height:10px;color:#000;font-weight:normal;transform:scaleX(0.8600);transform-origin:0 0;letter-spacing:0.251px;-webkit-text-stroke:0.05px #000;">System</div>
<div class="t" style="left:442.59999999999997px;top:147.01px;font-size:6.998px;line-height:10px;color:#000;font-weight:normal;transform:scaleX(0.8600);transform-origin:0 0;letter-spacing:0.251px;-webkit-text-stroke:0.05px #000;">Any</div>
<svg style="position:absolute;left:3.0999999999999943px;top:157.20000000000002px" width="9" height="9" viewBox="0 0 10 10"><circle cx="5" cy="5" r="4.9" fill="#737373"/><circle cx="5" cy="5" r="4.2" fill="#7a7a7a"/><path d="M2.7 5.1L4.4 6.9L7.5 3" stroke="#a6a6a6" stroke-width="1" fill="none"/></svg>
<div class="t" style="left:13.299999999999997px;top:157.47000000000003px;font-size:6.998px;line-height:10px;color:#000;font-weight:normal;transform:scaleX(0.8600);transform-origin:0 0;letter-spacing:0.251px;-webkit-text-stroke:0.05px #000;">Routing and Remote Access (PPTP-In)</div>
<div class="t" style="left:142.3px;top:157.47000000000003px;font-size:6.998px;line-height:10px;color:#000;font-weight:normal;transform:scaleX(0.8600);transform-origin:0 0;letter-spacing:0.251px;-webkit-text-stroke:0.05px #000;">Routing and Remote Access</div>
<div class="t" style="left:235.60000000000002px;top:157.47000000000003px;font-size:6.998px;line-height:10px;color:#000;font-weight:normal;transform:scaleX(0.8600);transform-origin:0 0;letter-spacing:0.251px;-webkit-text-stroke:0.05px #000;">All</div>
<div class="t" style="left:295.0px;top:157.47000000000003px;font-size:6.998px;line-height:10px;color:#000;font-weight:normal;transform:scaleX(0.8600);transform-origin:0 0;letter-spacing:0.251px;-webkit-text-stroke:0.05px #000;">No</div>
<div class="t" style="left:331.8px;top:157.47000000000003px;font-size:6.998px;line-height:10px;color:#000;font-weight:normal;transform:scaleX(0.8600);transform-origin:0 0;letter-spacing:0.251px;-webkit-text-stroke:0.05px #000;">Allow</div>
<div class="t" style="left:365.1px;top:157.47000000000003px;font-size:6.998px;line-height:10px;color:#000;font-weight:normal;transform:scaleX(0.8600);transform-origin:0 0;letter-spacing:0.251px;-webkit-text-stroke:0.05px #000;">No</div>
<div class="t" style="left:403.3px;top:157.47000000000003px;font-size:6.998px;line-height:10px;color:#000;font-weight:normal;transform:scaleX(0.8600);transform-origin:0 0;letter-spacing:0.251px;-webkit-text-stroke:0.05px #000;">System</div>
<div class="t" style="left:442.59999999999997px;top:157.47000000000003px;font-size:6.998px;line-height:10px;color:#000;font-weight:normal;transform:scaleX(0.8600);transform-origin:0 0;letter-spacing:0.251px;-webkit-text-stroke:0.05px #000;">Any</div>
<svg style="position:absolute;left:3.0999999999999943px;top:167.66px" width="9" height="9" viewBox="0 0 10 10"><circle cx="5" cy="5" r="4.9" fill="#737373"/><circle cx="5" cy="5" r="4.2" fill="#7a7a7a"/><path d="M2.7 5.1L4.4 6.9L7.5 3" stroke="#a6a6a6" stroke-width="1" fill="none"/></svg>
<div class="t" style="left:13.299999999999997px;top:167.93px;font-size:6.998px;line-height:10px;color:#000;font-weight:normal;transform:scaleX(0.8600);transform-origin:0 0;letter-spacing:0.251px;-webkit-text-stroke:0.05px #000;">Secure Socket Tunneling Protocol (SSTP-<span style="letter-spacing:0.551px">...</span></div>
<div class="t" style="left:142.3px;top:167.93px;font-size:6.998px;line-height:10px;color:#000;font-weight:normal;transform:scaleX(0.8600);transform-origin:0 0;letter-spacing:0.251px;-webkit-text-stroke:0.05px #000;">Secure Socket Tunneling Pr<span style="letter-spacing:0.551px">...</span></div>
<div class="t" style="left:235.60000000000002px;top:167.93px;font-size:6.998px;line-height:10px;color:#000;font-weight:normal;transform:scaleX(0.8600);transform-origin:0 0;letter-spacing:0.251px;-webkit-text-stroke:0.05px #000;">All</div>
<div class="t" style="left:295.0px;top:167.93px;font-size:6.998px;line-height:10px;color:#000;font-weight:normal;transform:scaleX(0.8600);transform-origin:0 0;letter-spacing:0.251px;-webkit-text-stroke:0.05px #000;">No</div>
<div class="t" style="left:331.8px;top:167.93px;font-size:6.998px;line-height:10px;color:#000;font-weight:normal;transform:scaleX(0.8600);transform-origin:0 0;letter-spacing:0.251px;-webkit-text-stroke:0.05px #000;">Allow</div>
<div class="t" style="left:365.1px;top:167.93px;font-size:6.998px;line-height:10px;color:#000;font-weight:normal;transform:scaleX(0.8600);transform-origin:0 0;letter-spacing:0.251px;-webkit-text-stroke:0.05px #000;">No</div>
<div class="t" style="left:403.3px;top:167.93px;font-size:6.998px;line-height:10px;color:#000;font-weight:normal;transform:scaleX(0.8600);transform-origin:0 0;letter-spacing:0.251px;-webkit-text-stroke:0.05px #000;">System</div>
<div class="t" style="left:442.59999999999997px;top:167.93px;font-size:6.998px;line-height:10px;color:#000;font-weight:normal;transform:scaleX(0.8600);transform-origin:0 0;letter-spacing:0.251px;-webkit-text-stroke:0.05px #000;">Any</div>
<svg style="position:absolute;left:3.0999999999999943px;top:178.12000000000003px" width="9" height="9" viewBox="0 0 10 10"><defs><radialGradient id="gg" cx="0.4" cy="0.35" r="0.7"><stop offset="0" stop-color="#4cc84c"/><stop offset="1" stop-color="#0d7a0d"/></radialGradient></defs><circle cx="5" cy="5" r="4.9" fill="#8a8a8a"/><circle cx="5" cy="5" r="4.2" fill="url(#gg)"/><path d="M2.7 5.1L4.4 6.9L7.5 3" stroke="#fff" stroke-width="1.3" fill="none"/></svg>
<div class="t" style="left:13.299999999999997px;top:178.39000000000004px;font-size:6.998px;line-height:10px;color:#000;font-weight:normal;transform:scaleX(0.8600);transform-origin:0 0;letter-spacing:0.251px;-webkit-text-stroke:0.05px #000;">SNMP Service (UDP In)</div>
<div class="t" style="left:142.3px;top:178.39000000000004px;font-size:6.998px;line-height:10px;color:#000;font-weight:normal;transform:scaleX(0.8600);transform-origin:0 0;letter-spacing:0.251px;-webkit-text-stroke:0.05px #000;">SNMP Service</div>
<div class="t" style="left:235.60000000000002px;top:178.39000000000004px;font-size:6.998px;line-height:10px;color:#000;font-weight:normal;transform:scaleX(0.8600);transform-origin:0 0;letter-spacing:0.251px;-webkit-text-stroke:0.05px #000;">Domain, Public</div>
<div class="t" style="left:295.0px;top:178.39000000000004px;font-size:6.998px;line-height:10px;color:#000;font-weight:normal;transform:scaleX(0.8600);transform-origin:0 0;letter-spacing:0.251px;-webkit-text-stroke:0.05px #000;">Yes</div>
<div class="t" style="left:331.8px;top:178.39000000000004px;font-size:6.998px;line-height:10px;color:#000;font-weight:normal;transform:scaleX(0.8600);transform-origin:0 0;letter-spacing:0.251px;-webkit-text-stroke:0.05px #000;">Allow</div>
<div class="t" style="left:365.1px;top:178.39000000000004px;font-size:6.998px;line-height:10px;color:#000;font-weight:normal;transform:scaleX(0.8600);transform-origin:0 0;letter-spacing:0.251px;-webkit-text-stroke:0.05px #000;">No</div>
<div class="t" style="left:403.3px;top:178.39000000000004px;font-size:6.998px;line-height:10px;color:#000;font-weight:normal;transform:scaleX(0.8600);transform-origin:0 0;letter-spacing:0.251px;-webkit-text-stroke:0.05px #000;">%System<span style="letter-spacing:0.551px">...</span></div>
<div class="t" style="left:442.59999999999997px;top:178.39000000000004px;font-size:6.998px;line-height:10px;color:#000;font-weight:normal;transform:scaleX(0.8600);transform-origin:0 0;letter-spacing:0.251px;-webkit-text-stroke:0.05px #000;">Any</div>
<div style="left:11.799999999999997px;top:187.85000000000002px;width:477.5px;height:10.5px;background:#3399ff"></div>
<svg style="position:absolute;left:3.0999999999999943px;top:188.58px" width="9" height="9" viewBox="0 0 10 10"><circle cx="5" cy="5" r="4.9" fill="#7fb0e2"/><path d="M2.7 5.1L4.4 6.9L7.5 3" stroke="#a9cbef" stroke-width="1" fill="none"/></svg>
<div class="t" style="left:13.299999999999997px;top:188.85000000000002px;font-size:6.998px;line-height:10px;color:#fff;font-weight:normal;transform:scaleX(0.8600);transform-origin:0 0;letter-spacing:0.251px;-webkit-text-stroke:0.05px #fff;">SNMP Service (UDP In)</div>
<div class="t" style="left:142.3px;top:188.85000000000002px;font-size:6.998px;line-height:10px;color:#fff;font-weight:normal;transform:scaleX(0.8600);transform-origin:0 0;letter-spacing:0.251px;-webkit-text-stroke:0.05px #fff;">SNMP Service</div>
<div class="t" style="left:235.60000000000002px;top:188.85000000000002px;font-size:6.998px;line-height:10px;color:#fff;font-weight:normal;transform:scaleX(0.8600);transform-origin:0 0;letter-spacing:0.251px;-webkit-text-stroke:0.05px #fff;">Private, Public</div>
<div class="t" style="left:295.0px;top:188.85000000000002px;font-size:6.998px;line-height:10px;color:#fff;font-weight:normal;transform:scaleX(0.8600);transform-origin:0 0;letter-spacing:0.251px;-webkit-text-stroke:0.05px #fff;">No</div>
<div class="t" style="left:331.8px;top:188.85000000000002px;font-size:6.998px;line-height:10px;color:#fff;font-weight:normal;transform:scaleX(0.8600);transform-origin:0 0;letter-spacing:0.251px;-webkit-text-stroke:0.05px #fff;">Allow</div>
<div class="t" style="left:365.1px;top:188.85000000000002px;font-size:6.998px;line-height:10px;color:#fff;font-weight:normal;transform:scaleX(0.8600);transform-origin:0 0;letter-spacing:0.251px;-webkit-text-stroke:0.05px #fff;">No</div>
<div class="t" style="left:403.3px;top:188.85000000000002px;font-size:6.998px;line-height:10px;color:#fff;font-weight:normal;transform:scaleX(0.8600);transform-origin:0 0;letter-spacing:0.251px;-webkit-text-stroke:0.05px #fff;">%System<span style="letter-spacing:0.551px">...</span></div>
<div class="t" style="left:442.59999999999997px;top:188.85000000000002px;font-size:6.998px;line-height:10px;color:#fff;font-weight:normal;transform:scaleX(0.8600);transform-origin:0 0;letter-spacing:0.251px;-webkit-text-stroke:0.05px #fff;">Any</div>
<svg style="position:absolute;left:3.0999999999999943px;top:199.04px" width="9" height="9" viewBox="0 0 10 10"><circle cx="5" cy="5" r="4.9" fill="#737373"/><circle cx="5" cy="5" r="4.2" fill="#7a7a7a"/><path d="M2.7 5.1L4.4 6.9L7.5 3" stroke="#a6a6a6" stroke-width="1" fill="none"/></svg>
<div class="t" style="left:13.299999999999997px;top:199.31px;font-size:6.998px;line-height:10px;color:#000;font-weight:normal;transform:scaleX(0.8600);transform-origin:0 0;letter-spacing:0.251px;-webkit-text-stroke:0.05px #000;">SNMP Trap Service (UDP In)</div>
<div class="t" style="left:142.3px;top:199.31px;font-size:6.998px;line-height:10px;color:#000;font-weight:normal;transform:scaleX(0.8600);transform-origin:0 0;letter-spacing:0.251px;-webkit-text-stroke:0.05px #000;">SNMP Trap Service</div>
<div class="t" style="left:235.60000000000002px;top:199.31px;font-size:6.998px;line-height:10px;color:#000;font-weight:normal;transform:scaleX(0.8600);transform-origin:0 0;letter-spacing:0.251px;-webkit-text-stroke:0.05px #000;">Private, Public</div>
<div class="t" style="left:295.0px;top:199.31px;font-size:6.998px;line-height:10px;color:#000;font-weight:normal;transform:scaleX(0.8600);transform-origin:0 0;letter-spacing:0.251px;-webkit-text-stroke:0.05px #000;">No</div>
<div class="t" style="left:331.8px;top:199.31px;font-size:6.998px;line-height:10px;color:#000;font-weight:normal;transform:scaleX(0.8600);transform-origin:0 0;letter-spacing:0.251px;-webkit-text-stroke:0.05px #000;">Allow</div>
<div class="t" style="left:365.1px;top:199.31px;font-size:6.998px;line-height:10px;color:#000;font-weight:normal;transform:scaleX(0.8600);transform-origin:0 0;letter-spacing:0.251px;-webkit-text-stroke:0.05px #000;">No</div>
<div class="t" style="left:403.3px;top:199.31px;font-size:6.998px;line-height:10px;color:#000;font-weight:normal;transform:scaleX(0.8600);transform-origin:0 0;letter-spacing:0.251px;-webkit-text-stroke:0.05px #000;">%System<span style="letter-spacing:0.551px">...</span></div>
<div class="t" style="left:442.59999999999997px;top:199.31px;font-size:6.998px;line-height:10px;color:#000;font-weight:normal;transform:scaleX(0.8600);transform-origin:0 0;letter-spacing:0.251px;-webkit-text-stroke:0.05px #000;">Any</div>
<svg style="position:absolute;left:3.0999999999999943px;top:209.50000000000003px" width="9" height="9" viewBox="0 0 10 10"><circle cx="5" cy="5" r="4.9" fill="#737373"/><circle cx="5" cy="5" r="4.2" fill="#7a7a7a"/><path d="M2.7 5.1L4.4 6.9L7.5 3" stroke="#a6a6a6" stroke-width="1" fill="none"/></svg>
<div class="t" style="left:13.299999999999997px;top:209.77000000000004px;font-size:6.998px;line-height:10px;color:#000;font-weight:normal;transform:scaleX(0.8600);transform-origin:0 0;letter-spacing:0.251px;-webkit-text-stroke:0.05px #000;">SNMP Trap Service (UDP In)</div>
<div class="t" style="left:142.3px;top:209.77000000000004px;font-size:6.998px;line-height:10px;color:#000;font-weight:normal;transform:scaleX(0.8600);transform-origin:0 0;letter-spacing:0.251px;-webkit-text-stroke:0.05px #000;">SNMP Trap Service</div>
<div class="t" style="left:235.60000000000002px;top:209.77000000000004px;font-size:6.998px;line-height:10px;color:#000;font-weight:normal;transform:scaleX(0.8600);transform-origin:0 0;letter-spacing:0.251px;-webkit-text-stroke:0.05px #000;">Domain</div>
<div class="t" style="left:295.0px;top:209.77000000000004px;font-size:6.998px;line-height:10px;color:#000;font-weight:normal;transform:scaleX(0.8600);transform-origin:0 0;letter-spacing:0.251px;-webkit-text-stroke:0.05px #000;">No</div>
<div class="t" style="left:331.8px;top:209.77000000000004px;font-size:6.998px;line-height:10px;color:#000;font-weight:normal;transform:scaleX(0.8600);transform-origin:0 0;letter-spacing:0.251px;-webkit-text-stroke:0.05px #000;">Allow</div>
<div class="t" style="left:365.1px;top:209.77000000000004px;font-size:6.998px;line-height:10px;color:#000;font-weight:normal;transform:scaleX(0.8600);transform-origin:0 0;letter-spacing:0.251px;-webkit-text-stroke:0.05px #000;">No</div>
<div class="t" style="left:403.3px;top:209.77000000000004px;font-size:6.998px;line-height:10px;color:#000;font-weight:normal;transform:scaleX(0.8600);transform-origin:0 0;letter-spacing:0.251px;-webkit-text-stroke:0.05px #000;">%System<span style="letter-spacing:0.551px">...</span></div>
<div class="t" style="left:442.59999999999997px;top:209.77000000000004px;font-size:6.998px;line-height:10px;color:#000;font-weight:normal;transform:scaleX(0.8600);transform-origin:0 0;letter-spacing:0.251px;-webkit-text-stroke:0.05px #000;">Any</div>
<svg style="position:absolute;left:3.0999999999999943px;top:219.96px" width="9" height="9" viewBox="0 0 10 10"><circle cx="5" cy="5" r="4.9" fill="#737373"/><circle cx="5" cy="5" r="4.2" fill="#7a7a7a"/><path d="M2.7 5.1L4.4 6.9L7.5 3" stroke="#a6a6a6" stroke-width="1" fill="none"/></svg>
<div class="t" style="left:13.299999999999997px;top:220.23000000000002px;font-size:6.998px;line-height:10px;color:#000;font-weight:normal;transform:scaleX(0.8600);transform-origin:0 0;letter-spacing:0.251px;-webkit-text-stroke:0.05px #000;">TPM Virtual Smart Card Management (<span style="letter-spacing:0.551px">...</span></div>
<div class="t" style="left:142.3px;top:220.23000000000002px;font-size:6.998px;line-height:10px;color:#000;font-weight:normal;transform:scaleX(0.8600);transform-origin:0 0;letter-spacing:0.251px;-webkit-text-stroke:0.05px #000;">TPM Virtual Smart Card Ma<span style="letter-spacing:0.551px">...</span></div>
<div class="t" style="left:235.60000000000002px;top:220.23000000000002px;font-size:6.998px;line-height:10px;color:#000;font-weight:normal;transform:scaleX(0.8600);transform-origin:0 0;letter-spacing:0.251px;-webkit-text-stroke:0.05px #000;">Domain</div>
<div class="t" style="left:295.0px;top:220.23000000000002px;font-size:6.998px;line-height:10px;color:#000;font-weight:normal;transform:scaleX(0.8600);transform-origin:0 0;letter-spacing:0.251px;-webkit-text-stroke:0.05px #000;">No</div>
<div class="t" style="left:331.8px;top:220.23000000000002px;font-size:6.998px;line-height:10px;color:#000;font-weight:normal;transform:scaleX(0.8600);transform-origin:0 0;letter-spacing:0.251px;-webkit-text-stroke:0.05px #000;">Allow</div>
<div class="t" style="left:365.1px;top:220.23000000000002px;font-size:6.998px;line-height:10px;color:#000;font-weight:normal;transform:scaleX(0.8600);transform-origin:0 0;letter-spacing:0.251px;-webkit-text-stroke:0.05px #000;">No</div>
<div class="t" style="left:403.3px;top:220.23000000000002px;font-size:6.998px;line-height:10px;color:#000;font-weight:normal;transform:scaleX(0.8600);transform-origin:0 0;letter-spacing:0.251px;-webkit-text-stroke:0.05px #000;">%System<span style="letter-spacing:0.551px">...</span></div>
<div class="t" style="left:442.59999999999997px;top:220.23000000000002px;font-size:6.998px;line-height:10px;color:#000;font-weight:normal;transform:scaleX(0.8600);transform-origin:0 0;letter-spacing:0.251px;-webkit-text-stroke:0.05px #000;">Any</div>
<svg style="position:absolute;left:3.0999999999999943px;top:230.42px" width="9" height="9" viewBox="0 0 10 10"><circle cx="5" cy="5" r="4.9" fill="#737373"/><circle cx="5" cy="5" r="4.2" fill="#7a7a7a"/><path d="M2.7 5.1L4.4 6.9L7.5 3" stroke="#a6a6a6" stroke-width="1" fill="none"/></svg>
<div class="t" style="left:13.299999999999997px;top:230.69px;font-size:6.998px;line-height:10px;color:#000;font-weight:normal;transform:scaleX(0.8600);transform-origin:0 0;letter-spacing:0.251px;-webkit-text-stroke:0.05px #000;">TPM Virtual Smart Card Management (<span style="letter-spacing:0.551px">...</span></div>
<div class="t" style="left:142.3px;top:230.69px;font-size:6.998px;line-height:10px;color:#000;font-weight:normal;transform:scaleX(0.8600);transform-origin:0 0;letter-spacing:0.251px;-webkit-text-stroke:0.05px #000;">TPM Virtual Smart Card Ma<span style="letter-spacing:0.551px">...</span></div>
<div class="t" style="left:235.60000000000002px;top:230.69px;font-size:6.998px;line-height:10px;color:#000;font-weight:normal;transform:scaleX(0.8600);transform-origin:0 0;letter-spacing:0.251px;-webkit-text-stroke:0.05px #000;">Private, Public</div>
<div class="t" style="left:295.0px;top:230.69px;font-size:6.998px;line-height:10px;color:#000;font-weight:normal;transform:scaleX(0.8600);transform-origin:0 0;letter-spacing:0.251px;-webkit-text-stroke:0.05px #000;">No</div>
<div class="t" style="left:331.8px;top:230.69px;font-size:6.998px;line-height:10px;color:#000;font-weight:normal;transform:scaleX(0.8600);transform-origin:0 0;letter-spacing:0.251px;-webkit-text-stroke:0.05px #000;">Allow</div>
<div class="t" style="left:365.1px;top:230.69px;font-size:6.998px;line-height:10px;color:#000;font-weight:normal;transform:scaleX(0.8600);transform-origin:0 0;letter-spacing:0.251px;-webkit-text-stroke:0.05px #000;">No</div>
<div class="t" style="left:403.3px;top:230.69px;font-size:6.998px;line-height:10px;color:#000;font-weight:normal;transform:scaleX(0.8600);transform-origin:0 0;letter-spacing:0.251px;-webkit-text-stroke:0.05px #000;">%System<span style="letter-spacing:0.551px">...</span></div>
<div class="t" style="left:442.59999999999997px;top:230.69px;font-size:6.998px;line-height:10px;color:#000;font-weight:normal;transform:scaleX(0.8600);transform-origin:0 0;letter-spacing:0.251px;-webkit-text-stroke:0.05px #000;">Any</div>
<svg style="position:absolute;left:3.0999999999999943px;top:240.88000000000002px" width="9" height="9" viewBox="0 0 10 10"><circle cx="5" cy="5" r="4.9" fill="#737373"/><circle cx="5" cy="5" r="4.2" fill="#7a7a7a"/><path d="M2.7 5.1L4.4 6.9L7.5 3" stroke="#a6a6a6" stroke-width="1" fill="none"/></svg>
<div class="t" style="left:13.299999999999997px;top:241.15000000000003px;font-size:6.998px;line-height:10px;color:#000;font-weight:normal;transform:scaleX(0.8600);transform-origin:0 0;letter-spacing:0.251px;-webkit-text-stroke:0.05px #000;">TPM Virtual Smart Card Management (<span style="letter-spacing:0.551px">...</span></div>
<div class="t" style="left:142.3px;top:241.15000000000003px;font-size:6.998px;line-height:10px;color:#000;font-weight:normal;transform:scaleX(0.8600);transform-origin:0 0;letter-spacing:0.251px;-webkit-text-stroke:0.05px #000;">TPM Virtual Smart Card Ma<span style="letter-spacing:0.551px">...</span></div>
<div class="t" style="left:235.60000000000002px;top:241.15000000000003px;font-size:6.998px;line-height:10px;color:#000;font-weight:normal;transform:scaleX(0.8600);transform-origin:0 0;letter-spacing:0.251px;-webkit-text-stroke:0.05px #000;">Domain</div>
<div class="t" style="left:295.0px;top:241.15000000000003px;font-size:6.998px;line-height:10px;color:#000;font-weight:normal;transform:scaleX(0.8600);transform-origin:0 0;letter-spacing:0.251px;-webkit-text-stroke:0.05px #000;">No</div>
<div class="t" style="left:331.8px;top:241.15000000000003px;font-size:6.998px;line-height:10px;color:#000;font-weight:normal;transform:scaleX(0.8600);transform-origin:0 0;letter-spacing:0.251px;-webkit-text-stroke:0.05px #000;">Allow</div>
<div class="t" style="left:365.1px;top:241.15000000000003px;font-size:6.998px;line-height:10px;color:#000;font-weight:normal;transform:scaleX(0.8600);transform-origin:0 0;letter-spacing:0.251px;-webkit-text-stroke:0.05px #000;">No</div>
<div class="t" style="left:403.3px;top:241.15000000000003px;font-size:6.998px;line-height:10px;color:#000;font-weight:normal;transform:scaleX(0.8600);transform-origin:0 0;letter-spacing:0.251px;-webkit-text-stroke:0.05px #000;">%System<span style="letter-spacing:0.551px">...</span></div>
<div class="t" style="left:442.59999999999997px;top:241.15000000000003px;font-size:6.998px;line-height:10px;color:#000;font-weight:normal;transform:scaleX(0.8600);transform-origin:0 0;letter-spacing:0.251px;-webkit-text-stroke:0.05px #000;">Any</div>
<svg style="position:absolute;left:3.0999999999999943px;top:251.34px" width="9" height="9" viewBox="0 0 10 10"><circle cx="5" cy="5" r="4.9" fill="#737373"/><circle cx="5" cy="5" r="4.2" fill="#7a7a7a"/><path d="M2.7 5.1L4.4 6.9L7.5 3" stroke="#a6a6a6" stroke-width="1" fill="none"/></svg>
<div class="t" style="left:13.299999999999997px;top:251.61px;font-size:6.998px;line-height:10px;color:#000;font-weight:normal;transform:scaleX(0.8600);transform-origin:0 0;letter-spacing:0.251px;-webkit-text-stroke:0.05px #000;">TPM Virtual Smart Card Management (<span style="letter-spacing:0.551px">...</span></div>
<div class="t" style="left:142.3px;top:251.61px;font-size:6.998px;line-height:10px;color:#000;font-weight:normal;transform:scaleX(0.8600);transform-origin:0 0;letter-spacing:0.251px;-webkit-text-stroke:0.05px #000;">TPM Virtual Smart Card Ma<span style="letter-spacing:0.551px">...</span></div>
<div class="t" style="left:235.60000000000002px;top:251.61px;font-size:6.998px;line-height:10px;color:#000;font-weight:normal;transform:scaleX(0.8600);transform-origin:0 0;letter-spacing:0.251px;-webkit-text-stroke:0.05px #000;">Private, Public</div>
<div class="t" style="left:295.0px;top:251.61px;font-size:6.998px;line-height:10px;color:#000;font-weight:normal;transform:scaleX(0.8600);transform-origin:0 0;letter-spacing:0.251px;-webkit-text-stroke:0.05px #000;">No</div>
<div class="t" style="left:331.8px;top:251.61px;font-size:6.998px;line-height:10px;color:#000;font-weight:normal;transform:scaleX(0.8600);transform-origin:0 0;letter-spacing:0.251px;-webkit-text-stroke:0.05px #000;">Allow</div>
<div class="t" style="left:365.1px;top:251.61px;font-size:6.998px;line-height:10px;color:#000;font-weight:normal;transform:scaleX(0.8600);transform-origin:0 0;letter-spacing:0.251px;-webkit-text-stroke:0.05px #000;">No</div>
<div class="t" style="left:403.3px;top:251.61px;font-size:6.998px;line-height:10px;color:#000;font-weight:normal;transform:scaleX(0.8600);transform-origin:0 0;letter-spacing:0.251px;-webkit-text-stroke:0.05px #000;">%System<span style="letter-spacing:0.551px">...</span></div>
<div class="t" style="left:442.59999999999997px;top:251.61px;font-size:6.998px;line-height:10px;color:#000;font-weight:normal;transform:scaleX(0.8600);transform-origin:0 0;letter-spacing:0.251px;-webkit-text-stroke:0.05px #000;">Any</div>
<svg style="position:absolute;left:3.0999999999999943px;top:261.79999999999995px" width="9" height="9" viewBox="0 0 10 10"><circle cx="5" cy="5" r="4.9" fill="#737373"/><circle cx="5" cy="5" r="4.2" fill="#7a7a7a"/><path d="M2.7 5.1L4.4 6.9L7.5 3" stroke="#a6a6a6" stroke-width="1" fill="none"/></svg>
<div class="t" style="left:13.299999999999997px;top:262.06999999999994px;font-size:6.998px;line-height:10px;color:#000;font-weight:normal;transform:scaleX(0.8600);transform-origin:0 0;letter-spacing:0.251px;-webkit-text-stroke:0.05px #000;">Virtual Machine Monitoring (DCOM-In)</div>
<div class="t" style="left:142.3px;top:262.06999999999994px;font-size:6.998px;line-height:10px;color:#000;font-weight:normal;transform:scaleX(0.8600);transform-origin:0 0;letter-spacing:0.251px;-webkit-text-stroke:0.05px #000;">Virtual Machine Monitoring</div>
<div class="t" style="left:235.60000000000002px;top:262.06999999999994px;font-size:6.998px;line-height:10px;color:#000;font-weight:normal;transform:scaleX(0.8600);transform-origin:0 0;letter-spacing:0.251px;-webkit-text-stroke:0.05px #000;">All</div>
<div class="t" style="left:295.0px;top:262.06999999999994px;font-size:6.998px;line-height:10px;color:#000;font-weight:normal;transform:scaleX(0.8600);transform-origin:0 0;letter-spacing:0.251px;-webkit-text-stroke:0.05px #000;">No</div>
<div class="t" style="left:331.8px;top:262.06999999999994px;font-size:6.998px;line-height:10px;color:#000;font-weight:normal;transform:scaleX(0.8600);transform-origin:0 0;letter-spacing:0.251px;-webkit-text-stroke:0.05px #000;">Allow</div>
<div class="t" style="left:365.1px;top:262.06999999999994px;font-size:6.998px;line-height:10px;color:#000;font-weight:normal;transform:scaleX(0.8600);transform-origin:0 0;letter-spacing:0.251px;-webkit-text-stroke:0.05px #000;">No</div>
<div class="t" style="left:403.3px;top:262.06999999999994px;font-size:6.998px;line-height:10px;color:#000;font-weight:normal;transform:scaleX(0.8600);transform-origin:0 0;letter-spacing:0.251px;-webkit-text-stroke:0.05px #000;">%System<span style="letter-spacing:0.551px">...</span></div>
<div class="t" style="left:442.59999999999997px;top:262.06999999999994px;font-size:6.998px;line-height:10px;color:#000;font-weight:normal;transform:scaleX(0.8600);transform-origin:0 0;letter-spacing:0.251px;-webkit-text-stroke:0.05px #000;">Any</div>
<svg style="position:absolute;left:3.0999999999999943px;top:272.26px" width="9" height="9" viewBox="0 0 10 10"><circle cx="5" cy="5" r="4.9" fill="#737373"/><circle cx="5" cy="5" r="4.2" fill="#7a7a7a"/><path d="M2.7 5.1L4.4 6.9L7.5 3" stroke="#a6a6a6" stroke-width="1" fill="none"/></svg>
<div class="t" style="left:13.299999999999997px;top:272.53px;font-size:6.998px;line-height:10px;color:#000;font-weight:normal;transform:scaleX(0.8600);transform-origin:0 0;letter-spacing:0.251px;-webkit-text-stroke:0.05px #000;">Virtual Machine Monitoring (Echo Reque<span style="letter-spacing:0.551px">...</span></div>
<div class="t" style="left:142.3px;top:272.53px;font-size:6.998px;line-height:10px;color:#000;font-weight:normal;transform:scaleX(0.8600);transform-origin:0 0;letter-spacing:0.251px;-webkit-text-stroke:0.05px #000;">Virtual Machine Monitoring</div>
<div class="t" style="left:235.60000000000002px;top:272.53px;font-size:6.998px;line-height:10px;color:#000;font-weight:normal;transform:scaleX(0.8600);transform-origin:0 0;letter-spacing:0.251px;-webkit-text-stroke:0.05px #000;">All</div>
<div class="t" style="left:295.0px;top:272.53px;font-size:6.998px;line-height:10px;color:#000;font-weight:normal;transform:scaleX(0.8600);transform-origin:0 0;letter-spacing:0.251px;-webkit-text-stroke:0.05px #000;">No</div>
<div class="t" style="left:331.8px;top:272.53px;font-size:6.998px;line-height:10px;color:#000;font-weight:normal;transform:scaleX(0.8600);transform-origin:0 0;letter-spacing:0.251px;-webkit-text-stroke:0.05px #000;">Allow</div>
<div class="t" style="left:365.1px;top:272.53px;font-size:6.998px;line-height:10px;color:#000;font-weight:normal;transform:scaleX(0.8600);transform-origin:0 0;letter-spacing:0.251px;-webkit-text-stroke:0.05px #000;">No</div>
<div class="t" style="left:403.3px;top:272.53px;font-size:6.998px;line-height:10px;color:#000;font-weight:normal;transform:scaleX(0.8600);transform-origin:0 0;letter-spacing:0.251px;-webkit-text-stroke:0.05px #000;">Any</div>
<div class="t" style="left:442.59999999999997px;top:272.53px;font-size:6.998px;line-height:10px;color:#000;font-weight:normal;transform:scaleX(0.8600);transform-origin:0 0;letter-spacing:0.251px;-webkit-text-stroke:0.05px #000;">Any</div>
<svg style="position:absolute;left:3.0999999999999943px;top:282.72px" width="9" height="9" viewBox="0 0 10 10"><circle cx="5" cy="5" r="4.9" fill="#737373"/><circle cx="5" cy="5" r="4.2" fill="#7a7a7a"/><path d="M2.7 5.1L4.4 6.9L7.5 3" stroke="#a6a6a6" stroke-width="1" fill="none"/></svg>
<div class="t" style="left:13.299999999999997px;top:282.99px;font-size:6.998px;line-height:10px;color:#000;font-weight:normal;transform:scaleX(0.8600);transform-origin:0 0;letter-spacing:0.251px;-webkit-text-stroke:0.05px #000;">Virtual Machine Monitoring (Echo Reque<span style="letter-spacing:0.551px">...</span></div>
<div class="t" style="left:142.3px;top:282.99px;font-size:6.998px;line-height:10px;color:#000;font-weight:normal;transform:scaleX(0.8600);transform-origin:0 0;letter-spacing:0.251px;-webkit-text-stroke:0.05px #000;">Virtual Machine Monitoring</div>
<div class="t" style="left:235.60000000000002px;top:282.99px;font-size:6.998px;line-height:10px;color:#000;font-weight:normal;transform:scaleX(0.8600);transform-origin:0 0;letter-spacing:0.251px;-webkit-text-stroke:0.05px #000;">All</div>
<div class="t" style="left:295.0px;top:282.99px;font-size:6.998px;line-height:10px;color:#000;font-weight:normal;transform:scaleX(0.8600);transform-origin:0 0;letter-spacing:0.251px;-webkit-text-stroke:0.05px #000;">No</div>
<div class="t" style="left:331.8px;top:282.99px;font-size:6.998px;line-height:10px;color:#000;font-weight:normal;transform:scaleX(0.8600);transform-origin:0 0;letter-spacing:0.251px;-webkit-text-stroke:0.05px #000;">Allow</div>
<div class="t" style="left:365.1px;top:282.99px;font-size:6.998px;line-height:10px;color:#000;font-weight:normal;transform:scaleX(0.8600);transform-origin:0 0;letter-spacing:0.251px;-webkit-text-stroke:0.05px #000;">No</div>
<div class="t" style="left:403.3px;top:282.99px;font-size:6.998px;line-height:10px;color:#000;font-weight:normal;transform:scaleX(0.8600);transform-origin:0 0;letter-spacing:0.251px;-webkit-text-stroke:0.05px #000;">Any</div>
<div class="t" style="left:442.59999999999997px;top:282.99px;font-size:6.998px;line-height:10px;color:#000;font-weight:normal;transform:scaleX(0.8600);transform-origin:0 0;letter-spacing:0.251px;-webkit-text-stroke:0.05px #000;">Any</div>
<svg style="position:absolute;left:3.0999999999999943px;top:293.17999999999995px" width="9" height="9" viewBox="0 0 10 10"><circle cx="5" cy="5" r="4.9" fill="#737373"/><circle cx="5" cy="5" r="4.2" fill="#7a7a7a"/><path d="M2.7 5.1L4.4 6.9L7.5 3" stroke="#a6a6a6" stroke-width="1" fill="none"/></svg>
<div class="t" style="left:13.299999999999997px;top:293.44999999999993px;font-size:6.998px;line-height:10px;color:#000;font-weight:normal;transform:scaleX(0.8600);transform-origin:0 0;letter-spacing:0.251px;-webkit-text-stroke:0.05px #000;">Virtual Machine Monitoring (NB-Session<span style="letter-spacing:0.551px">...</span></div>
<div class="t" style="left:142.3px;top:293.44999999999993px;font-size:6.998px;line-height:10px;color:#000;font-weight:normal;transform:scaleX(0.8600);transform-origin:0 0;letter-spacing:0.251px;-webkit-text-stroke:0.05px #000;">Virtual Machine Monitoring</div>
<div class="t" style="left:235.60000000000002px;top:293.44999999999993px;font-size:6.998px;line-height:10px;color:#000;font-weight:normal;transform:scaleX(0.8600);transform-origin:0 0;letter-spacing:0.251px;-webkit-text-stroke:0.05px #000;">All</div>
<div class="t" style="left:295.0px;top:293.44999999999993px;font-size:6.998px;line-height:10px;color:#000;font-weight:normal;transform:scaleX(0.8600);transform-origin:0 0;letter-spacing:0.251px;-webkit-text-stroke:0.05px #000;">No</div>
<div class="t" style="left:331.8px;top:293.44999999999993px;font-size:6.998px;line-height:10px;color:#000;font-weight:normal;transform:scaleX(0.8600);transform-origin:0 0;letter-spacing:0.251px;-webkit-text-stroke:0.05px #000;">Allow</div>
<div class="t" style="left:365.1px;top:293.44999999999993px;font-size:6.998px;line-height:10px;color:#000;font-weight:normal;transform:scaleX(0.8600);transform-origin:0 0;letter-spacing:0.251px;-webkit-text-stroke:0.05px #000;">No</div>
<div class="t" style="left:403.3px;top:293.44999999999993px;font-size:6.998px;line-height:10px;color:#000;font-weight:normal;transform:scaleX(0.8600);transform-origin:0 0;letter-spacing:0.251px;-webkit-text-stroke:0.05px #000;">Any</div>
<div class="t" style="left:442.59999999999997px;top:293.44999999999993px;font-size:6.998px;line-height:10px;color:#000;font-weight:normal;transform:scaleX(0.8600);transform-origin:0 0;letter-spacing:0.251px;-webkit-text-stroke:0.05px #000;">Any</div>
<svg style="position:absolute;left:3.0999999999999943px;top:303.64px" width="9" height="9" viewBox="0 0 10 10"><circle cx="5" cy="5" r="4.9" fill="#737373"/><circle cx="5" cy="5" r="4.2" fill="#7a7a7a"/><path d="M2.7 5.1L4.4 6.9L7.5 3" stroke="#a6a6a6" stroke-width="1" fill="none"/></svg>
<div class="t" style="left:13.299999999999997px;top:303.90999999999997px;font-size:6.998px;line-height:10px;color:#000;font-weight:normal;transform:scaleX(0.8600);transform-origin:0 0;letter-spacing:0.251px;-webkit-text-stroke:0.05px #000;">Virtual Machine Monitoring (RPC)</div>
<div class="t" style="left:142.3px;top:303.90999999999997px;font-size:6.998px;line-height:10px;color:#000;font-weight:normal;transform:scaleX(0.8600);transform-origin:0 0;letter-spacing:0.251px;-webkit-text-stroke:0.05px #000;">Virtual Machine Monitoring</div>
<div class="t" style="left:235.60000000000002px;top:303.90999999999997px;font-size:6.998px;line-height:10px;color:#000;font-weight:normal;transform:scaleX(0.8600);transform-origin:0 0;letter-spacing:0.251px;-webkit-text-stroke:0.05px #000;">All</div>
<div class="t" style="left:295.0px;top:303.90999999999997px;font-size:6.998px;line-height:10px;color:#000;font-weight:normal;transform:scaleX(0.8600);transform-origin:0 0;letter-spacing:0.251px;-webkit-text-stroke:0.05px #000;">No</div>
<div class="t" style="left:331.8px;top:303.90999999999997px;font-size:6.998px;line-height:10px;color:#000;font-weight:normal;transform:scaleX(0.8600);transform-origin:0 0;letter-spacing:0.251px;-webkit-text-stroke:0.05px #000;">Allow</div>
<div class="t" style="left:365.1px;top:303.90999999999997px;font-size:6.998px;line-height:10px;color:#000;font-weight:normal;transform:scaleX(0.8600);transform-origin:0 0;letter-spacing:0.251px;-webkit-text-stroke:0.05px #000;">No</div>
<div class="t" style="left:403.3px;top:303.90999999999997px;font-size:6.998px;line-height:10px;color:#000;font-weight:normal;transform:scaleX(0.8600);transform-origin:0 0;letter-spacing:0.251px;-webkit-text-stroke:0.05px #000;">%System<span style="letter-spacing:0.551px">...</span></div>
<div class="t" style="left:442.59999999999997px;top:303.90999999999997px;font-size:6.998px;line-height:10px;color:#000;font-weight:normal;transform:scaleX(0.8600);transform-origin:0 0;letter-spacing:0.251px;-webkit-text-stroke:0.05px #000;">Any</div>
</div>
<div style="left:599.3px;top:55.9px;width:9.5px;height:319.1px;background:#fff;border-left:0.7px solid #e3e3e3;border-right:0.5px solid #ececec;box-sizing:border-box"></div>
<div style="left:599.9px;top:66.2px;width:8.6px;height:0.6px;background:#e3e3e3"></div>
<svg style="position:absolute;left:601.4px;top:61.6px" width="4.8" height="3.0" viewBox="0 0 4.8 3.0"><path d="M0.3 2.6L2.4 0.5L4.5 2.6" stroke="#606060" stroke-width="1.15" fill="none"/></svg>
<div style="left:599.9px;top:281px;width:8.6px;height:59.5px;background:#dcdcdc"></div>
<div style="left:601.2px;top:307.3px;width:5.8px;height:7px;background:#e8e8e8"></div>
<div style="left:602.2px;top:308.25px;width:3.8px;height:1.1px;background:#5e5e5e"></div>
<div style="left:602.2px;top:310.25px;width:3.8px;height:1.1px;background:#5e5e5e"></div>
<div style="left:602.2px;top:312.25px;width:3.8px;height:1.1px;background:#5e5e5e"></div>
<div style="left:599.9px;top:365.6px;width:8.6px;height:0.6px;background:#e3e3e3"></div>
<svg style="position:absolute;left:601.6px;top:369px" width="4.4" height="2.8" viewBox="0 0 4.4 2.8"><path d="M0.3 0.4L2.2 2.3L4.1000000000000005 0.4" stroke="#606060" stroke-width="1.15" fill="none"/></svg>
<div style="left:110px;top:375px;width:489.3px;height:10px;background:#fff;border-top:0.8px solid #e3e3e3;box-sizing:border-box"></div>
<div style="left:119.9px;top:375.6px;width:216.5px;height:9.4px;background:#dcdcdc;border-left:0.6px solid #cfcfcf;box-sizing:border-box"></div>
<div style="left:589.4px;top:375.6px;width:0.6px;height:9.4px;background:#e3e3e3"></div>
<svg style="position:absolute;left:114px;top:378px" width="2.8" height="3.8" viewBox="0 0 2.8 3.8"><path d="M2.4 0.3L0.5 1.9L2.4 3.5" stroke="#4a4a4a" stroke-width="1.15" fill="none"/></svg>
<svg style="position:absolute;left:592.6px;top:378px" width="2.8" height="3.8" viewBox="0 0 2.8 3.8"><path d="M0.4 0.3L2.3 1.9L0.4 3.5" stroke="#4a4a4a" stroke-width="1.15" fill="none"/></svg>
<div style="left:599.3px;top:375px;width:9.1px;height:10px;background:#f0f0f0;border-left:0.7px solid #dedede;box-sizing:border-box"></div>
<div style="left:225.1px;top:377.0px;width:7px;height:5.8px;background:#e8e8e8"></div>
<div style="left:226.04999999999998px;top:378.0px;width:1.1px;height:3.8px;background:#5e5e5e"></div>
<div style="left:228.04999999999998px;top:378.0px;width:1.1px;height:3.8px;background:#5e5e5e"></div>
<div style="left:230.04999999999998px;top:378.0px;width:1.1px;height:3.8px;background:#5e5e5e"></div>
<div style="left:608.4px;top:43.7px;width:1.1px;height:341.3px;background:#b9b9bd"></div>
<div style="left:609.5px;top:43.7px;width:1.5px;height:342.3px;background:#f7f7f7"></div>
<div style="left:611px;top:43.7px;width:1px;height:341.3px;background:#7a7a7a"></div>
<div style="left:229px;top:260px;width:83px;height:82px;background:#f0f0f0;border:1px solid #a9a9a9;box-sizing:border-box;box-shadow:0.5px 0.5px 0.5px rgba(0,0,0,0.12)"></div>
<div style="left:245px;top:261px;width:0.7px;height:79.5px;background:#e2e2e2"></div>
<div style="left:245.7px;top:261px;width:0.7px;height:79.5px;background:#fff"></div>
<div style="left:247px;top:274px;width:63px;height:0.7px;background:#e0e0e0"></div>
<div style="left:247px;top:274.7px;width:63px;height:0.7px;background:#fff"></div>
<div style="left:247px;top:313px;width:63px;height:0.7px;background:#e0e0e0"></div>
<div style="left:247px;top:313.7px;width:63px;height:0.7px;background:#fff"></div>
<div style="left:247px;top:327px;width:63px;height:0.7px;background:#e0e0e0"></div>
<div style="left:247px;top:327.7px;width:63px;height:0.7px;background:#fff"></div>
<div class="t" style="left:248.6px;top:263.5px;font-size:6.510px;line-height:10px;color:#000;font-weight:bold;transform:scaleX(0.8000);transform-origin:0 0;letter-spacing:0.360px;-webkit-text-stroke:0.06px #000;">Enable Rule</div>
<div class="t" style="left:248.5px;top:278px;font-size:7.053px;line-height:10px;color:#000;font-weight:normal;transform:scaleX(0.8600);transform-origin:0 0;letter-spacing:0.253px;-webkit-text-stroke:0.05px #000;">Cut</div>
<div class="t" style="left:248.5px;top:289.5px;font-size:7.053px;line-height:10px;color:#000;font-weight:normal;transform:scaleX(0.8600);transform-origin:0 0;letter-spacing:0.253px;-webkit-text-stroke:0.05px #000;">Copy</div>
<div class="t" style="left:248.5px;top:302px;font-size:7.053px;line-height:10px;color:#000;font-weight:normal;transform:scaleX(0.8600);transform-origin:0 0;letter-spacing:0.253px;-webkit-text-stroke:0.05px #000;">Delete</div>
<div class="t" style="left:248.5px;top:315.5px;font-size:7.053px;line-height:10px;color:#000;font-weight:normal;transform:scaleX(0.8600);transform-origin:0 0;letter-spacing:0.253px;-webkit-text-stroke:0.05px #000;">Properties</div>
<div class="t" style="left:248.5px;top:330.8px;font-size:7.053px;line-height:10px;color:#000;font-weight:normal;transform:scaleX(0.8600);transform-origin:0 0;letter-spacing:0.253px;-webkit-text-stroke:0.05px #000;">Help</div>
<div style="left:612px;top:43.7px;width:137.7px;height:341.3px;background:#fff"></div>
<div style="left:612px;top:385px;width:137.7px;height:1px;background:#e6e6e6"></div>
<div style="left:612px;top:44px;width:136.6px;height:12px;background:#f0f0f0;border-top:0.9px solid #808080;border-bottom:0.9px solid #d3d3d3;border-left:0.8px solid #fff;box-sizing:border-box"></div>
<div class="t" style="left:615.1px;top:45.7px;font-size:6.597px;line-height:10px;color:#000;font-weight:bold;transform:scaleX(0.8600);transform-origin:0 0;letter-spacing:0.236px;-webkit-text-stroke:0px #000;">Actions</div>
<div style="left:612.2px;top:56px;width:136.4px;height:13.8px;background:linear-gradient(#c6dcf1,#a8c5e6 85%,#9fb8d2)"></div>
<div class="t" style="left:615.6px;top:59px;font-size:8.788px;line-height:10px;color:#24384f;font-weight:normal;transform:scaleX(0.8600);transform-origin:0 0;letter-spacing:0.315px;-webkit-text-stroke:0.05px #24384f;">Inbound Rules</div>
<svg style="position:absolute;left:740px;top:62px" width="5.5" height="3" viewBox="0 0 5.5 3"><path d="M0 3L2.75 0L5.5 3Z" fill="#000"/></svg>
<div style="left:612.2px;top:181.1px;width:136.4px;height:13.2px;background:linear-gradient(#c6dcf1,#a8c5e6 85%,#9fb8d2)"></div>
<div class="t" style="left:616.2px;top:183.8px;font-size:8.463px;line-height:10px;color:#24384f;font-weight:normal;transform:scaleX(0.8600);transform-origin:0 0;letter-spacing:0.303px;-webkit-text-stroke:0.05px #24384f;">SNMP Service (UDP In)</div>
<svg style="position:absolute;left:740px;top:187px" width="5.5" height="3" viewBox="0 0 5.5 3"><path d="M0 3L2.75 0L5.5 3Z" fill="#000"/></svg>
<div style="left:615px;top:82.6px;width:131px;height:0.8px;background:#f1f1f1"></div>
<div style="left:615px;top:123.6px;width:131px;height:0.8px;background:#f1f1f1"></div>
<div style="left:615px;top:137.2px;width:131px;height:0.8px;background:#f1f1f1"></div>
<div style="left:615px;top:207.79999999999998px;width:131px;height:0.8px;background:#f1f1f1"></div>
<div style="left:615px;top:248.29999999999998px;width:131px;height:0.8px;background:#f1f1f1"></div>
<div style="left:615px;top:262.0px;width:131px;height:0.8px;background:#f1f1f1"></div>
<div class="t" style="left:629.5px;top:72.8px;font-size:6.998px;line-height:10px;color:#000;font-weight:normal;transform:scaleX(0.8600);transform-origin:0 0;letter-spacing:0.251px;-webkit-text-stroke:0.05px #000;">New Rule<span style="letter-spacing:0.551px">...</span></div>
<svg style="position:absolute;left:615.3px;top:72.6px" width="8.5" height="9" viewBox="0 0 8.5 9"><rect x="0" y="1.8" width="8.4" height="6.8" fill="#b14a30"/><path d="M0 3.5H8.4M0 5.2H8.4M0 6.9H8.4M2 1.8V3.5M5.5 1.8V3.5M3.7 3.5V5.2M7 3.5V5.2M2 5.2V6.9M5.5 5.2V6.9M3.7 6.9V8.6" stroke="#d98a6e" stroke-width="0.45"/><circle cx="1.6" cy="1.6" r="1.6" fill="#f7c13a"/><path d="M3.2 3.2L7.6 3.4L6.3 4.7L8.9 7.3L7.4 8.8L4.8 6.2L3.5 7.5Z" fill="#3ccf3c" stroke="#2a9a2a" stroke-width="0.3"/></svg>
<div class="t" style="left:629.5px;top:86.3px;font-size:6.998px;line-height:10px;color:#000;font-weight:normal;transform:scaleX(0.8600);transform-origin:0 0;letter-spacing:0.251px;-webkit-text-stroke:0.05px #000;">Filter by Profile</div>
<svg style="position:absolute;left:615.3px;top:86.1px" width="8.5" height="9" viewBox="0 0 8.5 9"><path d="M0.6 0.9H7.6L4.9 4.4V7.8L3.3 6.8V4.4Z" fill="#eef6f6" stroke="#1d5c5e" stroke-width="1.1" stroke-linejoin="round"/><path d="M2.4 1.7H5.8L4.4 3.4H3.8Z" fill="#9fd0d0"/></svg>
<svg style="position:absolute;left:741px;top:88.3px" width="3" height="5" viewBox="0 0 3 5"><path d="M0 0L3 2.5L0 5Z" fill="#000"/></svg>
<div class="t" style="left:629.5px;top:99.39999999999999px;font-size:6.998px;line-height:10px;color:#000;font-weight:normal;transform:scaleX(0.8600);transform-origin:0 0;letter-spacing:0.251px;-webkit-text-stroke:0.05px #000;">Filter by State</div>
<svg style="position:absolute;left:615.3px;top:99.19999999999999px" width="8.5" height="9" viewBox="0 0 8.5 9"><path d="M0.6 0.9H7.6L4.9 4.4V7.8L3.3 6.8V4.4Z" fill="#eef6f6" stroke="#1d5c5e" stroke-width="1.1" stroke-linejoin="round"/><path d="M2.4 1.7H5.8L4.4 3.4H3.8Z" fill="#9fd0d0"/></svg>
<svg style="position:absolute;left:741px;top:101.39999999999999px" width="3" height="5" viewBox="0 0 3 5"><path d="M0 0L3 2.5L0 5Z" fill="#000"/></svg>
<div class="t" style="left:629.5px;top:112.39999999999999px;font-size:6.998px;line-height:10px;color:#000;font-weight:normal;transform:scaleX(0.8600);transform-origin:0 0;letter-spacing:0.251px;-webkit-text-stroke:0.05px #000;">Filter by Group</div>
<svg style="position:absolute;left:615.3px;top:112.19999999999999px" width="8.5" height="9" viewBox="0 0 8.5 9"><path d="M0.6 0.9H7.6L4.9 4.4V7.8L3.3 6.8V4.4Z" fill="#eef6f6" stroke="#1d5c5e" stroke-width="1.1" stroke-linejoin="round"/><path d="M2.4 1.7H5.8L4.4 3.4H3.8Z" fill="#9fd0d0"/></svg>
<svg style="position:absolute;left:741px;top:114.39999999999999px" width="3" height="5" viewBox="0 0 3 5"><path d="M0 0L3 2.5L0 5Z" fill="#000"/></svg>
<div class="t" style="left:629.5px;top:126.39999999999999px;font-size:6.998px;line-height:10px;color:#000;font-weight:normal;transform:scaleX(0.8600);transform-origin:0 0;letter-spacing:0.251px;-webkit-text-stroke:0.05px #000;">View</div>
<svg style="position:absolute;left:741px;top:128.4px" width="3" height="5" viewBox="0 0 3 5"><path d="M0 0L3 2.5L0 5Z" fill="#000"/></svg>
<div class="t" style="left:629.5px;top:140.3px;font-size:6.998px;line-height:10px;color:#000;font-weight:normal;transform:scaleX(0.8600);transform-origin:0 0;letter-spacing:0.251px;-webkit-text-stroke:0.05px #000;">Refresh</div>
<svg style="position:absolute;left:615.3px;top:140.1px" width="8.5" height="9" viewBox="0 0 8.5 9"><path d="M0.9 0.2H5.4L7.6 2.4V8.8H0.9Z" fill="#fafafa" stroke="#9a9a9a" stroke-width="0.55"/><path d="M6 5.6A1.9 1.9 0 1 1 5.2 3.9" stroke="#25a525" stroke-width="1.25" fill="none"/><path d="M4.1 2.6L6.4 3.1L5.2 5.1Z" fill="#25a525"/></svg>
<div class="t" style="left:629.5px;top:153.4px;font-size:6.998px;line-height:10px;color:#000;font-weight:normal;transform:scaleX(0.8600);transform-origin:0 0;letter-spacing:0.251px;-webkit-text-stroke:0.05px #000;">Export List<span style="letter-spacing:0.551px">...</span></div>
<svg style="position:absolute;left:615.3px;top:153.2px" width="8.5" height="9" viewBox="0 0 8.5 9"><path d="M0.6 0.3H5.2L7.2 2.3V8.9H0.6Z" fill="#fbf5dc" stroke="#b9b39a" stroke-width="0.55"/><path d="M1.6 3.2H5M1.6 4.5H5M1.6 7.6H3.6" stroke="#c9c2a6" stroke-width="0.55"/><path d="M3.4 5.1H5.9V3.8L8.7 6L5.9 8.2V6.9H3.4Z" fill="#3ccc3c" stroke="#2a9a2a" stroke-width="0.25"/></svg>
<div class="t" style="left:629.5px;top:167.20000000000002px;font-size:6.998px;line-height:10px;color:#000;font-weight:normal;transform:scaleX(0.8600);transform-origin:0 0;letter-spacing:0.251px;-webkit-text-stroke:0.05px #000;">Help</div>
<svg style="position:absolute;left:615.3px;top:167.0px" width="8.5" height="9" viewBox="0 0 8.5 9"><defs><linearGradient id="gh2" x1="0" y1="0" x2="0" y2="1"><stop offset="0" stop-color="#4a7ae0"/><stop offset="1" stop-color="#1c3a9e"/></linearGradient></defs><rect x="0.4" y="0" width="7.4" height="9.4" rx="0.6" fill="url(#gh2)"/><path d="M2.6 3.2Q2.6 1.7 4.1 1.7Q5.6 1.7 5.6 3.1Q5.6 3.9 4.7 4.5Q4.2 4.9 4.2 5.7" stroke="#fff" stroke-width="1.1" fill="none"/><rect x="3.6" y="6.5" width="1.2" height="1.2" fill="#fff"/></svg>
<div class="t" style="left:629.5px;top:197.0px;font-size:6.998px;line-height:10px;color:#000;font-weight:normal;transform:scaleX(0.8600);transform-origin:0 0;letter-spacing:0.251px;-webkit-text-stroke:0.05px #000;">Enable Rule</div>
<svg style="position:absolute;left:615.3px;top:196.79999999999998px" width="8.5" height="9" viewBox="0 0 8.5 9"><circle cx="4" cy="4.2" r="3.9" fill="#2b9b2b"/><path d="M4 1.6L6.4 4.3H5V6.6H3V4.3H1.6Z" fill="#fff"/></svg>
<div class="t" style="left:629.5px;top:210.8px;font-size:6.998px;line-height:10px;color:#000;font-weight:normal;transform:scaleX(0.8600);transform-origin:0 0;letter-spacing:0.251px;-webkit-text-stroke:0.05px #000;">Cut</div>
<svg style="position:absolute;left:615.3px;top:210.6px" width="8.5" height="9" viewBox="0 0 8.5 9"><path d="M7.2 0.3L3.6 5.2M5.6 0.2L4.6 5.6" stroke="#6f7f95" stroke-width="0.7"/><path d="M1 7.8Q0.6 5.6 2.4 5L3.9 4.6L4 6.2Q3.6 8.4 1 7.8Z" fill="#2f86e0"/><path d="M4.2 8.2Q3.6 6.4 4.6 5.2L6 5.3Q6.4 7.6 4.2 8.2Z" fill="#3a92e8"/></svg>
<div class="t" style="left:629.5px;top:224.0px;font-size:6.998px;line-height:10px;color:#000;font-weight:normal;transform:scaleX(0.8600);transform-origin:0 0;letter-spacing:0.251px;-webkit-text-stroke:0.05px #000;">Copy</div>
<svg style="position:absolute;left:615.3px;top:223.79999999999998px" width="8.5" height="9" viewBox="0 0 8.5 9"><path d="M0.5 0.5H4L5 1.5V5.5H0.5Z" fill="#f4f4f4" stroke="#9aa" stroke-width="0.5"/><path d="M3 2.5H6.5L7.5 3.5V8H3Z" fill="#f4f4f4" stroke="#9aa" stroke-width="0.5"/><path d="M4 4.5H6.5M4 6H6.5" stroke="#7aa0c8" stroke-width="0.5"/></svg>
<div class="t" style="left:629.5px;top:237.5px;font-size:6.998px;line-height:10px;color:#000;font-weight:normal;transform:scaleX(0.8600);transform-origin:0 0;letter-spacing:0.251px;-webkit-text-stroke:0.05px #000;">Delete</div>
<svg style="position:absolute;left:615.3px;top:237.29999999999998px" width="8.5" height="9" viewBox="0 0 8.5 9"><path d="M0.3 1.2L1.6 0L4.2 2.8L6.8 0L8.1 1.2L5.4 4.2L8.1 7.2L6.8 8.4L4.2 5.6L1.6 8.4L0.3 7.2L3 4.2Z" fill="#e3262a" stroke="#b01015" stroke-width="0.3"/></svg>
<div class="t" style="left:629.5px;top:250.8px;font-size:6.998px;line-height:10px;color:#000;font-weight:normal;transform:scaleX(0.8600);transform-origin:0 0;letter-spacing:0.251px;-webkit-text-stroke:0.05px #000;">Properties</div>
<svg style="position:absolute;left:615.3px;top:250.6px" width="8.5" height="9" viewBox="0 0 8.5 9"><rect x="0.5" y="0.5" width="7" height="8" fill="#e8e8e8" stroke="#9a9a9a" stroke-width="0.5"/><path d="M1.5 2.5H6.5M1.5 4H6.5M1.5 5.5H4" stroke="#8aa" stroke-width="0.6"/><rect x="1.5" y="6.5" width="3" height="1.2" fill="#4ab0e0"/></svg>
<div class="t" style="left:629.5px;top:264.5px;font-size:6.998px;line-height:10px;color:#000;font-weight:normal;transform:scaleX(0.8600);transform-origin:0 0;letter-spacing:0.251px;-webkit-text-stroke:0.05px #000;">Help</div>
<svg style="position:absolute;left:615.3px;top:264.3px" width="8.5" height="9" viewBox="0 0 8.5 9"><defs><linearGradient id="gh2" x1="0" y1="0" x2="0" y2="1"><stop offset="0" stop-color="#4a7ae0"/><stop offset="1" stop-color="#1c3a9e"/></linearGradient></defs><rect x="0.4" y="0" width="7.4" height="9.4" rx="0.6" fill="url(#gh2)"/><path d="M2.6 3.2Q2.6 1.7 4.1 1.7Q5.6 1.7 5.6 3.1Q5.6 3.9 4.7 4.5Q4.2 4.9 4.2 5.7" stroke="#fff" stroke-width="1.1" fill="none"/><rect x="3.6" y="6.5" width="1.2" height="1.2" fill="#fff"/></svg>
</body></html>
